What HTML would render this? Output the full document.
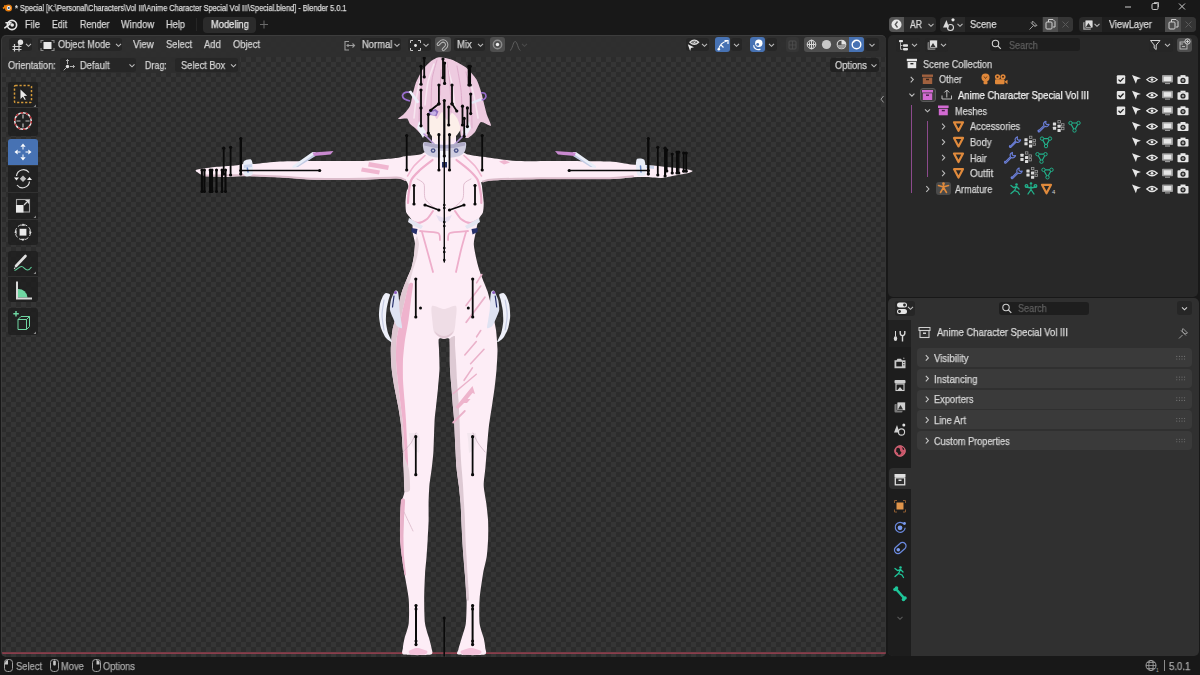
<!DOCTYPE html>
<html><head><meta charset="utf-8">
<style>
*{margin:0;padding:0;box-sizing:border-box}
html,body{width:1200px;height:675px;overflow:hidden;background:#181818;font-family:"Liberation Sans",sans-serif;color:#d6d6d6;position:relative}
.a{position:absolute}
.t{position:absolute;white-space:nowrap;line-height:12px;will-change:transform;-webkit-text-stroke:0.25px currentColor}
#vp{left:1px;top:35px;width:885px;box-shadow:inset 1px 0 0 #3a3a3a,inset -1px 0 0 #333;height:622px;border-radius:5px;overflow:hidden;background-color:#2c2c2c;
 background-image:linear-gradient(45deg,#353535 25%,transparent 25%,transparent 75%,#353535 75%),linear-gradient(45deg,#353535 25%,transparent 25%,transparent 75%,#353535 75%);
 background-size:10px 10px;background-position:0px 2px,5px 7px}
#outl{left:888px;top:35px;width:310px;height:262px;border-radius:5px;background:#282828}
#props{left:888px;top:298px;width:311px;height:358px;border-radius:5px;background:#303030}
svg{position:absolute;left:0;top:0}
</style></head><body>
<div class="a" style="left:196px;top:18px;width:1px;height:13px;background:#262626;border-radius:0px;"></div>
<div class="a" style="left:203px;top:17px;width:53px;height:16px;background:#2b2b2b;border-radius:4px;"></div>
<div id="vp" class="a"></div>
<svg width="1200" height="675" style="position:absolute;left:0;top:0"><defs><clipPath id="vpc"><rect x="2" y="35" width="884" height="622" rx="5"/></clipPath></defs><g clip-path="url(#vpc)"><rect x="2" y="652.3" width="884" height="1.6" fill="#94404f"/>
<path d="M196.0 170.0 C196.9 169.6 202.8 168.7 205.0 168.3 C207.2 168.0 211.5 167.3 215.0 167.0 C218.5 166.7 231.6 165.8 235.0 165.5 C238.4 165.2 241.7 164.2 244.0 164.0 C246.3 163.8 250.8 164.3 255.0 164.0 C259.2 163.7 273.0 161.9 280.0 161.6 C287.0 161.2 305.5 161.1 315.0 161.0 C324.5 160.9 352.2 161.3 361.7 161.0 C371.2 160.7 391.7 158.5 396.7 158.0 C401.7 157.5 402.2 156.7 404.9 156.3 C407.6 155.9 417.1 155.3 420.0 154.6 C422.9 153.9 425.6 150.5 430.0 150.0 C434.4 149.5 453.6 149.5 458.0 150.0 C462.4 150.5 464.6 153.7 468.0 154.6 C471.4 155.5 481.8 156.8 487.5 157.5 C493.2 158.2 507.9 160.6 516.7 161.0 C525.5 161.4 552.4 160.9 563.3 161.0 C574.2 161.1 602.1 161.2 610.0 161.6 C617.9 162.0 626.9 164.1 631.0 164.5 C635.1 164.9 641.4 164.8 645.0 165.0 C648.6 165.2 657.8 166.0 662.0 166.4 C666.2 166.8 677.5 167.8 681.0 168.3 C684.5 168.8 691.5 170.3 692.4 170.8 C693.3 171.3 690.5 172.5 688.5 173.0 C686.5 173.5 678.1 174.9 675.0 175.5 C671.9 176.1 665.5 177.7 662.0 177.9 C658.5 178.1 648.4 177.1 645.0 177.0 C641.6 176.9 637.1 177.0 633.0 177.2 C628.9 177.4 620.9 178.8 610.0 179.0 C599.1 179.2 553.6 178.8 540.0 179.0 C526.4 179.2 500.1 180.0 493.3 180.3 C486.5 180.7 483.0 181.3 481.7 182.0 C480.4 182.7 481.8 183.9 482.0 186.3 C482.2 188.7 483.6 199.6 483.7 202.6 C483.8 205.6 483.5 210.5 482.9 212.4 C482.3 214.3 479.7 216.6 478.8 219.0 C477.9 221.4 476.2 230.1 475.6 233.0 C475.0 235.9 473.8 241.1 473.8 243.7 C473.8 246.3 475.1 252.7 475.6 255.5 C476.1 258.3 477.7 264.6 478.5 267.4 C479.3 270.2 481.7 276.4 482.7 279.2 C483.7 282.0 486.6 288.7 487.4 291.1 C488.2 293.5 489.1 297.2 489.8 300.0 C490.5 302.8 492.3 311.5 493.0 315.0 C493.7 318.5 495.5 326.0 496.0 330.0 C496.5 334.0 497.4 344.8 497.5 349.3 C497.6 353.8 496.9 364.0 496.6 368.5 C496.3 373.0 495.2 383.3 494.6 387.8 C494.0 392.3 492.5 402.5 491.8 407.0 C491.1 411.5 489.5 421.5 488.9 426.3 C488.3 431.1 487.4 443.2 487.0 448.0 C486.6 452.8 485.8 463.4 485.4 467.8 C485.0 472.2 483.6 481.5 483.7 485.6 C483.8 489.7 485.8 499.2 486.3 503.3 C486.8 507.4 487.9 516.8 488.1 521.0 C488.3 525.2 488.3 534.8 488.1 538.9 C487.9 543.0 487.4 551.8 486.8 556.0 C486.2 560.2 483.7 569.5 482.9 574.5 C482.1 579.5 480.0 593.3 479.6 599.0 C479.2 604.7 479.1 618.9 479.6 623.4 C480.1 627.9 483.0 635.1 483.7 638.0 C484.4 640.9 485.2 646.0 485.3 647.9 C485.4 649.8 487.6 653.8 484.5 654.6 C481.4 655.4 461.4 655.2 458.4 654.6 C455.4 654.0 458.0 651.4 458.4 649.5 C458.8 647.6 460.8 641.0 461.7 638.0 C462.6 635.0 465.2 627.9 465.8 623.4 C466.4 618.9 466.7 604.7 466.6 599.0 C466.5 593.3 465.3 579.5 464.9 574.5 C464.5 569.5 463.7 560.2 463.4 556.0 C463.1 551.8 462.5 543.0 462.3 538.9 C462.1 534.8 461.6 525.2 461.4 521.0 C461.2 516.8 460.9 507.4 460.6 503.3 C460.3 499.2 459.3 489.7 458.8 485.6 C458.3 481.5 456.9 472.0 456.5 467.8 C456.1 463.6 455.8 455.6 455.5 450.0 C455.2 444.4 454.4 425.0 454.1 420.0 C453.8 415.0 453.3 410.7 453.0 407.0 C452.7 403.3 451.9 392.5 451.5 388.0 C451.1 383.5 450.2 373.0 450.0 368.5 C449.8 364.0 449.8 352.7 449.8 349.3 C449.8 345.9 450.3 340.3 449.6 339.0 C448.9 337.7 445.3 338.5 444.0 338.5 C442.7 338.5 439.4 337.7 438.8 339.0 C438.2 340.3 438.9 345.9 439.0 349.3 C439.1 352.7 439.6 364.0 439.5 368.5 C439.4 373.0 438.4 383.5 438.0 388.0 C437.6 392.5 436.4 403.3 436.0 407.0 C435.6 410.7 434.9 415.0 434.6 420.0 C434.3 425.0 433.8 444.4 433.5 450.0 C433.2 455.6 432.3 463.6 431.8 467.8 C431.3 472.0 429.8 481.5 429.4 485.6 C429.0 489.7 428.7 499.2 428.6 503.3 C428.5 507.4 428.7 516.8 428.6 521.0 C428.5 525.2 427.9 534.8 427.7 538.9 C427.5 543.0 426.9 551.8 426.6 556.0 C426.3 560.2 425.3 569.5 425.0 574.5 C424.7 579.5 424.2 593.3 424.2 599.0 C424.2 604.7 424.4 618.9 425.0 623.4 C425.6 627.9 428.2 635.1 429.0 638.0 C429.8 640.9 431.3 646.0 431.5 647.9 C431.7 649.8 433.9 653.8 430.7 654.6 C427.5 655.4 407.0 655.4 403.8 654.6 C400.6 653.8 402.8 649.8 402.9 647.9 C403.0 646.0 403.9 640.9 404.6 638.0 C405.3 635.1 408.2 627.9 408.7 623.4 C409.2 618.9 409.2 604.7 408.7 599.0 C408.2 593.3 405.4 579.4 404.6 574.5 C403.8 569.6 402.4 560.9 401.9 556.7 C401.4 552.5 400.3 543.1 400.1 538.9 C399.9 534.7 400.0 525.2 400.1 521.0 C400.2 516.8 400.5 506.8 401.0 503.3 C401.5 499.8 404.3 495.0 404.6 490.9 C404.9 486.8 403.9 472.6 403.7 467.8 C403.5 463.0 403.1 454.8 402.8 450.0 C402.5 445.2 401.7 431.3 401.2 426.3 C400.7 421.3 399.1 411.5 398.3 407.0 C397.5 402.5 395.3 392.3 394.5 387.8 C393.7 383.3 392.0 373.0 391.6 368.5 C391.2 364.0 390.7 353.8 390.8 349.3 C390.9 344.8 391.8 334.0 392.5 330.0 C393.2 326.0 395.7 318.5 396.5 315.0 C397.3 311.5 399.0 302.8 399.7 300.0 C400.4 297.2 401.3 293.5 402.1 291.1 C402.9 288.7 405.7 282.0 406.8 279.2 C407.9 276.4 410.8 270.2 411.6 267.4 C412.4 264.6 413.6 258.3 414.0 255.5 C414.4 252.7 415.1 246.3 415.0 243.7 C414.9 241.1 413.1 235.1 412.8 233.0 C412.5 230.9 412.7 227.0 412.5 225.4 C412.3 223.8 411.9 220.5 411.2 219.0 C410.5 217.5 407.0 214.3 406.3 212.4 C405.6 210.5 405.5 205.0 405.5 202.6 C405.5 200.2 406.2 193.9 406.5 192.0 C406.8 190.1 408.5 188.0 408.4 186.7 C408.3 185.4 407.4 181.8 406.0 180.8 C404.6 179.8 401.9 178.6 396.7 178.5 C391.5 178.4 371.2 179.6 361.7 179.7 C352.2 179.8 324.5 180.0 315.0 179.7 C305.5 179.4 288.3 177.7 280.0 177.3 C271.7 176.9 250.1 176.0 244.0 176.0 C237.9 176.0 232.6 177.0 228.0 177.0 C223.4 177.0 208.6 176.6 205.0 176.0 C201.4 175.4 198.1 172.7 197.0 172.0 C195.9 171.3 195.1 170.4 196.0 170.0Z" fill="#fdedf6"/>
<path d="M205.0 175.5 C210.2 175.5 234.0 175.2 244.0 175.3 C254.0 175.4 270.5 176.1 280.0 176.6 C289.5 177.1 304.1 178.5 315.0 178.8 C325.9 179.1 350.8 179.0 361.7 178.8 C372.6 178.6 390.9 177.3 396.7 177.5 C402.5 177.7 403.9 179.7 405.0 180.0" fill="none" stroke="#dcbccb" stroke-width="2" stroke-linecap="round" />
<path d="M633.0 176.3 C629.9 176.6 622.4 177.9 610.0 178.2 C597.6 178.5 555.6 178.0 540.0 178.2 C524.4 178.4 500.9 179.1 493.3 179.5 C485.7 179.9 484.4 181.2 483.0 181.5" fill="none" stroke="#dcbccb" stroke-width="2" stroke-linecap="round" />
<path d="M406.8 279.2 C406.1 279.9 402.8 289.0 402.1 291.1 C401.4 293.2 400.3 297.6 399.7 300.0 C399.1 302.4 397.2 312.0 396.5 315.0 C395.8 318.0 393.1 326.6 392.5 330.0 C391.9 333.4 390.9 345.4 390.8 349.3 C390.7 353.2 391.2 364.6 391.6 368.5 C392.0 372.4 393.8 383.9 394.5 387.8 C395.2 391.7 397.6 403.1 398.3 407.0 C399.0 410.9 400.8 422.0 401.2 426.3 C401.6 430.6 402.6 445.9 402.8 450.0 C403.1 454.1 403.5 463.7 403.7 467.8 C403.9 471.9 404.3 488.7 404.6 490.9 C404.9 493.1 406.4 491.1 406.5 490.0 C406.6 488.9 406.1 483.0 406.0 480.0 C405.9 477.0 405.2 464.0 405.0 460.0 C404.8 456.0 404.2 444.0 404.0 440.0 C403.8 436.0 402.9 424.0 402.5 420.0 C402.1 416.0 400.5 404.0 400.0 400.0 C399.5 396.0 398.1 384.0 397.7 380.0 C397.3 376.0 396.1 364.0 396.0 360.0 C395.9 356.0 396.1 344.0 396.5 340.0 C396.9 336.0 399.6 324.0 400.5 320.0 C401.4 316.0 404.1 303.6 405.0 300.0 C405.9 296.4 408.8 286.1 409.0 284.0 C409.2 281.9 407.5 278.5 406.8 279.2Z" fill="#dfc8d2" />
<path d="M409.0 284.0 C408.2 285.6 405.9 296.4 405.0 300.0 C404.1 303.6 401.4 316.0 400.5 320.0 C399.6 324.0 396.9 336.0 396.5 340.0 C396.1 344.0 395.9 356.0 396.0 360.0 C396.1 364.0 397.3 376.0 397.7 380.0 C398.1 384.0 399.5 396.0 400.0 400.0 C400.5 404.0 402.1 416.0 402.5 420.0 C402.9 424.0 403.8 436.0 404.0 440.0 C404.2 444.0 404.8 456.0 405.0 460.0 C405.2 464.0 405.9 477.0 406.0 480.0 C406.1 483.0 406.2 489.0 406.5 490.0 C406.8 491.0 408.3 491.0 408.5 490.0 C408.7 489.0 408.6 483.0 408.5 480.0 C408.4 477.0 408.1 464.0 408.0 460.0 C407.9 456.0 407.2 444.0 407.0 440.0 C406.8 436.0 406.2 424.0 406.0 420.0 C405.8 416.0 404.8 404.0 404.5 400.0 C404.2 396.0 403.1 384.0 403.0 380.0 C402.9 376.0 402.8 364.0 403.0 360.0 C403.2 356.0 404.4 344.0 405.0 340.0 C405.6 336.0 407.9 324.0 408.5 320.0 C409.1 316.0 410.6 303.6 411.0 300.0 C411.4 296.4 413.2 285.6 413.0 284.0 C412.8 282.4 409.8 282.4 409.0 284.0Z" fill="#efb3cd" />
<path d="M401.0 500.0 C400.5 502.1 400.2 517.1 400.1 521.0 C400.0 524.9 399.9 535.3 400.1 538.9 C400.3 542.5 401.4 553.1 401.9 556.7 C402.3 560.3 404.2 572.8 404.6 574.5 C405.0 576.2 406.1 575.9 406.0 574.0 C405.9 572.1 404.2 559.6 404.0 556.0 C403.8 552.4 403.5 541.6 403.5 538.0 C403.5 534.4 403.9 523.8 404.0 520.0 C404.1 516.2 405.3 502.0 405.0 500.0 C404.7 498.0 401.5 497.9 401.0 500.0Z" fill="#e9b2ca" />
<path d="M403.5 455.0 C404.0 455.2 408.4 466.5 409.0 470.0 C409.6 473.5 410.4 487.9 410.0 490.0 C409.6 492.1 405.2 493.1 404.6 490.9 C404.0 488.7 403.8 471.4 403.7 467.8 C403.6 464.2 403.0 454.8 403.5 455.0Z" fill="#e4d2da" />
<path d="M404.0 512.0 C405.2 514.5 411.8 528.5 413.0 531.0" fill="none" stroke="#d9b8c8" stroke-width="0.8" stroke-linecap="round" />
<path d="M449.6 339.0 C449.1 340.3 449.8 346.4 449.8 349.3 C449.8 352.2 449.8 364.6 450.0 368.5 C450.2 372.4 451.2 384.1 451.5 388.0 C451.8 391.9 452.7 403.8 453.0 407.0 C453.3 410.2 453.9 415.7 454.1 420.0 C454.4 424.3 455.3 445.2 455.5 450.0 C455.7 454.8 456.2 464.2 456.5 467.8 C456.8 471.4 458.4 482.1 458.8 485.6 C459.2 489.2 460.3 499.8 460.6 503.3 C460.9 506.8 461.2 517.4 461.4 521.0 C461.6 524.6 462.1 535.4 462.3 538.9 C462.5 542.4 463.1 552.4 463.4 556.0 C463.7 559.6 464.6 570.2 464.9 574.5 C465.2 578.8 466.2 596.5 466.6 599.0 C467.0 601.5 468.9 601.5 469.0 599.0 C469.1 596.5 467.8 578.3 467.5 574.0 C467.2 569.7 466.7 559.6 466.5 556.0 C466.3 552.4 465.6 541.5 465.5 538.0 C465.4 534.5 465.1 524.5 465.0 521.0 C464.9 517.5 464.2 506.6 464.0 503.0 C463.8 499.4 463.2 488.6 463.0 485.0 C462.8 481.4 461.8 470.5 461.5 467.0 C461.2 463.5 460.7 454.7 460.5 450.0 C460.3 445.3 459.7 425.0 459.5 420.0 C459.3 415.0 458.8 404.0 458.5 400.0 C458.2 396.0 457.2 384.0 457.0 380.0 C456.8 376.0 456.2 363.5 456.0 360.0 C455.8 356.5 455.1 347.4 455.0 345.0 C454.9 342.6 455.3 336.6 454.8 336.0 C454.3 335.4 450.1 337.7 449.6 339.0Z" fill="#ddc9d3" />
<path d="M432.0 306.0 C433.5 304.3 440.8 309.0 444.0 309.0 C447.2 309.0 454.5 304.3 456.0 306.0 C457.5 307.7 455.8 318.4 455.5 322.0 C455.2 325.6 454.8 330.8 453.5 333.0 C452.2 335.2 447.5 337.8 446.0 338.5 C444.5 339.2 443.5 339.2 442.0 338.5 C440.5 337.8 435.8 335.2 434.5 333.0 C433.2 330.8 432.8 325.6 432.5 322.0 C432.2 318.4 430.5 307.7 432.0 306.0Z" fill="#efdde6" />
<path d="M434.5 331q9.5 10 19 0q-2 6-9.5 7.5q-7.5-1.5-9.5-7.5z" fill="#e2c9d5" />
<path d="M481.8 274.5 C481.1 275.6 477.3 281.7 476.6 282.8" fill="none" stroke="#eab2ca" stroke-width="1.6" stroke-linecap="round" />
<path d="M480.7 286.0 C478.7 288.6 468.0 303.0 466.0 305.6" fill="none" stroke="#eab2ca" stroke-width="1.6" stroke-linecap="round" />
<path d="M484.9 297.3 C482.4 300.6 468.7 318.9 466.2 322.2" fill="none" stroke="#eab2ca" stroke-width="1.8" stroke-linecap="round" />
<path d="M480.7 330.5 C480.2 331.3 477.1 336.0 476.6 336.8" fill="none" stroke="#eab2ca" stroke-width="1.6" stroke-linecap="round" />
<path d="M476.3 341.6 C474.8 343.4 466.3 353.2 464.8 355.0" fill="none" stroke="#eab2ca" stroke-width="1.6" stroke-linecap="round" />
<path d="M484.0 349.3 C482.2 351.2 472.4 361.8 470.6 363.7" fill="none" stroke="#eab2ca" stroke-width="1.6" stroke-linecap="round" />
<path d="M472.4 367.9 C471.3 369.6 465.2 378.6 464.1 380.3" fill="none" stroke="#eab2ca" stroke-width="1.6" stroke-linecap="round" />
<path d="M476.3 374.3 C473.2 376.9 456.3 391.0 453.2 393.6" fill="none" stroke="#eab2ca" stroke-width="1.4" stroke-linecap="round" />
<path d="M464.8 411.0 C463.3 412.5 454.7 421.0 453.2 422.5" fill="none" stroke="#eab2ca" stroke-width="1.8" stroke-linecap="round" />
<path d="M472.5 386l-17 21 2.5 2 6-6 3 0 3.5-4-3 0 5-6 2.5 1z" fill="#eeb4cc" />
<path d="M415.0 243.7 C414.7 245.6 414.3 253.1 414.0 255.5 C413.7 257.9 412.3 265.0 411.6 267.4 C410.9 269.8 407.1 277.5 406.8 279.2 C406.5 280.9 408.4 284.9 409.0 284.0 C409.6 283.1 412.2 272.7 413.0 270.0 C413.8 267.3 416.4 259.6 417.0 257.0 C417.6 254.4 419.0 246.1 419.0 244.0 C419.0 241.9 417.4 236.0 417.0 236.0 C416.6 236.0 415.3 241.8 415.0 243.7Z" fill="#e8d6de" />
<path d="M432.5 160.0 C430.8 161.3 422.8 167.3 420.0 170.0 C417.2 172.7 412.8 176.7 411.3 180.0 C409.8 183.3 408.9 191.9 408.5 195.0 C408.1 198.1 408.1 201.9 408.0 203.0" fill="none" stroke="#eeaecb" stroke-width="2.2" stroke-linecap="round" />
<path d="M456.5 160.0 C458.2 161.3 466.2 167.3 469.0 170.0 C471.8 172.7 476.1 176.7 477.7 180.0 C479.3 183.3 480.5 191.9 481.0 195.0 C481.5 198.1 481.3 201.9 481.3 203.0" fill="none" stroke="#eeaecb" stroke-width="2.2" stroke-linecap="round" />
<path d="M425.0 155.5 C423.5 156.9 416.3 163.3 414.0 166.0 C411.7 168.7 408.4 174.7 407.5 176.0" fill="none" stroke="#f0b6d0" stroke-width="1.6" stroke-linecap="round" />
<path d="M464.0 155.5 C465.5 156.9 472.7 163.3 475.0 166.0 C477.3 168.7 480.6 174.7 481.5 176.0" fill="none" stroke="#f0b6d0" stroke-width="1.6" stroke-linecap="round" />
<path d="M433.0 211.0 C432.2 212.1 429.0 217.4 427.0 219.0 C425.0 220.6 420.3 222.9 418.0 223.0 C415.7 223.1 411.1 220.4 410.0 220.0" fill="none" stroke="#eeaecb" stroke-width="2" stroke-linecap="round" />
<path d="M455.0 211.0 C455.8 212.1 459.0 217.4 461.0 219.0 C463.0 220.6 467.7 222.9 470.0 223.0 C472.3 223.1 476.9 220.4 478.0 220.0" fill="none" stroke="#eeaecb" stroke-width="2" stroke-linecap="round" />
<path d="M420.0 231.0 C422.4 231.3 435.3 231.8 438.0 233.0 C440.7 234.2 439.7 239.1 440.0 240.0" fill="none" stroke="#eeaecb" stroke-width="1.8" stroke-linecap="round" />
<path d="M468.0 231.0 C465.6 231.3 452.7 231.8 450.0 233.0 C447.3 234.2 448.3 239.1 448.0 240.0" fill="none" stroke="#eeaecb" stroke-width="1.8" stroke-linecap="round" />
<path d="M422.0 232.0 C422.7 234.4 425.5 244.7 427.0 250.0 C428.5 255.3 432.2 269.1 433.0 272.0" fill="none" stroke="#eeaecb" stroke-width="1.8" stroke-linecap="round" />
<path d="M466.0 232.0 C465.3 234.4 462.3 244.7 461.0 250.0 C459.7 255.3 456.7 269.1 456.0 272.0" fill="none" stroke="#eeaecb" stroke-width="1.8" stroke-linecap="round" />
<path d="M417.0 179.0 C417.9 179.7 422.9 181.3 424.0 184.0 C425.1 186.7 423.6 195.5 425.3 199.0 C427.0 202.5 435.4 208.5 437.0 210.0" fill="none" stroke="#d9b3c6" stroke-width="0.8" stroke-linecap="round" />
<path d="M471.0 179.0 C470.1 179.7 465.1 181.3 464.0 184.0 C462.9 186.7 464.4 195.5 462.7 199.0 C461.0 202.5 452.6 208.5 451.0 210.0" fill="none" stroke="#d9b3c6" stroke-width="0.8" stroke-linecap="round" />
<g fill="#f0b6d0"><path d="M362 167.5l18 3-1 4-18-3z"/><path d="M369 162l20 3.5-1 4.5-20-3.5z"/><path d="M499 161.5l6-1.5 5 2.5-6 2z"/></g>
<path d="M409 218q7 4 14 8l-2 3q-8-3-13-7z" fill="#e4e6f2" />
<path d="M411.5 228l6 1-1 5.5-5-2.5z" fill="#27306a" />
<path d="M479 218q-7 4-14 8l2 3q8-3 13-7z" fill="#e4e6f2" />
<path d="M477.5 228l-6 1 1 5.5 5-2.5z" fill="#27306a" />
<path d="M436 215l8 3 8-3-3 6-5 2-5-2z" fill="#e8def0" />
<path d="M292.5 168l4.5 -0.5 19.5-13 -1-2.5-3 0-20 14z" fill="#e9eef8" />
<path d="M296 167l18-12.5 1.5 1.5-17.5 11z" fill="#c3cbe4" />
<path d="M312.5 152.5l21-1.5-3 3.5-16.5 1.5z" fill="#c98ad0" />
<path d="M596 168l-4.5 -0.5-19.5-13 1-2.5 3 0 20 14z" fill="#e9eef8" />
<path d="M592.5 167l-18-12.5-1.5 1.5 17.5 11z" fill="#c3cbe4" />
<path d="M576 152.5l-21-1.5 3 3.5 16.5 1.5z" fill="#c98ad0" />
<path d="M244.0 161.0 C245.1 159.9 249.8 158.7 251.0 159.5 C252.2 160.3 252.9 164.9 253.0 167.0 C253.1 169.1 253.1 173.8 252.0 175.0 C250.9 176.2 246.2 176.9 245.0 176.0 C243.8 175.1 243.1 170.0 243.0 168.0 C242.9 166.0 242.9 162.1 244.0 161.0Z" fill="#e8ecf6" />
<path d="M247.0 166.0 C247.1 166.8 247.9 171.2 248.0 172.0" fill="none" stroke="#6a88c8" stroke-width="1.5" stroke-linecap="round" />
<path d="M637.0 159.0 C638.1 158.0 642.9 158.4 644.0 159.5 C645.1 160.6 645.4 164.9 645.5 167.0 C645.6 169.1 646.0 173.9 645.0 175.0 C644.0 176.1 639.2 176.6 638.0 175.5 C636.8 174.4 636.1 169.2 636.0 167.0 C635.9 164.8 635.9 160.0 637.0 159.0Z" fill="#e8ecf6" />
<path d="M640.5 166.0 C640.6 166.8 640.9 171.2 641.0 172.0" fill="none" stroke="#6a88c8" stroke-width="1.5" stroke-linecap="round" />
<path d="M252 164l-8 1 0 3 8-1z" fill="#c9d3ea" />
<path d="M646 165l8 1 0 3-8-1z" fill="#c9d3ea" />
<path d="M386.0 293.0 C386.8 292.8 389.7 293.7 390.0 294.5 C390.3 295.3 388.9 298.2 388.5 300.0 C388.1 301.8 386.8 307.4 386.5 310.0 C386.2 312.6 385.8 319.3 386.0 322.0 C386.2 324.7 387.3 330.7 388.0 333.0 C388.7 335.3 392.2 341.4 392.0 342.0 C391.8 342.6 387.3 339.6 386.0 338.0 C384.7 336.4 381.8 330.6 381.0 328.0 C380.2 325.4 379.1 318.8 379.0 316.0 C378.9 313.2 379.5 306.3 380.0 304.0 C380.5 301.7 382.3 297.3 383.0 296.0 C383.7 294.7 385.2 293.2 386.0 293.0Z" fill="#eef0f9" />
<path d="M503.2 293.0 C502.4 292.8 499.5 293.7 499.2 294.5 C498.9 295.3 500.3 298.2 500.7 300.0 C501.1 301.8 502.4 307.4 502.7 310.0 C503.0 312.6 503.4 319.3 503.2 322.0 C503.0 324.7 501.9 330.7 501.2 333.0 C500.5 335.3 497.0 341.4 497.2 342.0 C497.4 342.6 501.9 339.6 503.2 338.0 C504.5 336.4 507.4 330.6 508.2 328.0 C509.0 325.4 510.1 318.8 510.2 316.0 C510.3 313.2 509.7 306.3 509.2 304.0 C508.7 301.7 506.9 297.3 506.2 296.0 C505.5 294.7 504.0 293.2 503.2 293.0Z" fill="#eef0f9" />
<path d="M395.0 291.0 C395.8 290.1 397.5 290.9 398.0 292.0 C398.5 293.1 398.8 297.9 399.0 300.0 C399.2 302.1 399.3 307.7 399.5 310.0 C399.7 312.3 400.7 317.9 401.0 320.0 C401.3 322.1 402.5 327.3 402.0 328.0 C401.5 328.7 398.1 327.2 397.0 326.0 C395.9 324.8 393.8 319.9 393.0 318.0 C392.2 316.1 390.2 312.1 390.0 310.0 C389.8 307.9 390.4 302.2 391.0 300.0 C391.6 297.8 394.2 291.9 395.0 291.0Z" fill="#dfe3f2" />
<path d="M494.2 291.0 C493.4 290.1 491.7 290.9 491.2 292.0 C490.7 293.1 490.4 297.9 490.2 300.0 C490.0 302.1 489.9 307.7 489.7 310.0 C489.5 312.3 488.5 317.9 488.2 320.0 C487.9 322.1 486.7 327.3 487.2 328.0 C487.7 328.7 491.2 327.2 492.2 326.0 C493.3 324.8 495.4 319.9 496.2 318.0 C497.0 316.1 499.0 312.1 499.2 310.0 C499.4 307.9 498.8 302.2 498.2 300.0 C497.6 297.8 495.0 291.9 494.2 291.0Z" fill="#dfe3f2" />
<path d="M384.0 300.0 C383.7 302.0 382.0 311.0 382.0 315.0 C382.0 319.0 383.7 328.0 384.0 330.0" fill="none" stroke="#c5cbe3" stroke-width="1.2" stroke-linecap="round" />
<path d="M505.2 300.0 C505.5 302.0 507.2 311.0 507.2 315.0 C507.2 319.0 505.5 328.0 505.2 330.0" fill="none" stroke="#c5cbe3" stroke-width="1.2" stroke-linecap="round" />
<path d="M394.0 296.0 C393.8 297.5 392.7 305.5 392.5 307.0" fill="none" stroke="#27306a" stroke-width="1.2" stroke-linecap="round" />
<path d="M495.2 296.0 C495.4 297.5 496.5 305.5 496.7 307.0" fill="none" stroke="#27306a" stroke-width="1.2" stroke-linecap="round" />
<circle cx="395.5" cy="292.5" r="1.5" fill="#8c5cc0"/><circle cx="493.7" cy="292.5" r="1.5" fill="#8c5cc0"/>
<path d="M409 433h9l2 6-1 14-5-3-4-10z" fill="#f3e6ee" />
<path d="M467 433h9l1 7-3 10-5 3-1-14z" fill="#f3e6ee" />
<path d="M403.0 452.0 C404.1 450.8 409.3 445.5 411.0 443.0 C412.7 440.5 415.3 434.3 416.0 433.0" fill="none" stroke="#c9aebd" stroke-width="0.7" stroke-linecap="round" />
<path d="M473.0 433.0 C473.7 434.3 476.4 440.5 478.0 443.0 C479.6 445.5 484.1 450.8 485.0 452.0" fill="none" stroke="#c9aebd" stroke-width="0.7" stroke-linecap="round" />
<path d="M409.0 651.0 C409.8 650.1 414.6 648.0 417.0 648.0 C419.4 648.0 425.9 650.1 427.0 651.0 C428.1 651.9 427.1 654.0 425.0 654.5 C422.9 655.0 413.1 655.0 411.0 654.5 C408.9 654.0 408.2 651.9 409.0 651.0Z" fill="#f4c2da" />
<path d="M461.0 651.0 C462.1 650.1 468.3 648.0 471.0 648.0 C473.7 648.0 479.9 650.1 481.0 651.0 C482.1 651.9 481.4 654.0 479.0 654.5 C476.6 655.0 465.4 655.0 463.0 654.5 C460.6 654.0 459.9 651.9 461.0 651.0Z" fill="#f4c2da" />
<path d="M432 126h24v20h-24z" fill="#fdedf6" />
<path d="M428.0 110.0 C430.4 107.3 439.7 106.0 444.0 106.0 C448.3 106.0 457.6 107.3 460.0 110.0 C462.4 112.7 462.7 122.4 462.0 126.0 C461.3 129.6 457.4 135.0 455.0 137.0 C452.6 139.0 446.9 141.0 444.0 141.0 C441.1 141.0 435.4 139.0 433.0 137.0 C430.6 135.0 426.7 129.6 426.0 126.0 C425.3 122.4 425.6 112.7 428.0 110.0Z" fill="#fcefe9" />
<path d="M438.9 57.3 C436.8 57.5 432.3 60.2 430.7 61.4 C429.1 62.6 424.1 67.5 422.6 69.6 C421.1 71.7 417.0 80.2 416.0 82.6 C415.0 85.0 413.4 91.7 412.8 94.0 C412.2 96.3 410.9 104.0 410.0 106.0 C409.1 108.0 405.2 112.7 404.0 114.0 C402.8 115.3 397.8 118.3 398.1 118.8 C398.4 119.3 405.8 118.1 407.0 118.6 C408.2 119.1 409.2 123.1 410.0 124.0 C410.8 124.9 413.9 127.0 415.0 128.0 C416.1 129.0 419.8 133.1 421.0 134.0 C422.2 134.9 426.2 137.6 427.0 137.0 C427.8 136.4 428.9 129.9 429.0 128.0 C429.1 126.1 427.6 119.4 428.0 118.0 C428.4 116.6 432.1 113.9 433.0 114.0 C433.9 114.1 436.1 119.2 437.0 119.0 C437.9 118.8 441.0 111.9 442.0 112.0 C443.0 112.1 446.0 119.9 447.0 120.0 C448.0 120.1 451.0 113.2 452.0 113.0 C453.0 112.8 456.2 116.7 457.0 118.0 C457.8 119.3 459.6 124.2 460.0 126.0 C460.4 127.8 460.2 134.8 461.0 136.0 C461.8 137.2 466.6 138.4 468.0 138.0 C469.4 137.6 473.7 133.6 475.0 132.0 C476.3 130.4 479.4 122.6 481.0 122.0 C482.6 121.4 490.4 126.5 491.0 125.8 C491.6 125.1 487.6 117.0 487.0 115.0 C486.4 113.0 485.1 107.7 484.5 105.4 C483.9 103.1 482.1 95.0 481.3 92.4 C480.5 89.8 477.9 81.7 476.4 79.3 C474.9 76.9 469.0 70.0 466.6 68.0 C464.2 66.0 454.8 60.9 452.0 59.8 C449.2 58.7 441.0 57.1 438.9 57.3Z" fill="#eecbe0" />
<path d="M434.0 64.0 C433.2 66.4 429.2 76.5 428.0 82.0 C426.8 87.5 425.4 101.9 425.0 105.0" fill="none" stroke="#f7e6f0" stroke-width="1.6" stroke-linecap="round" />
<path d="M446.0 62.0 C446.8 64.9 450.8 77.9 452.0 84.0 C453.2 90.1 454.6 104.8 455.0 108.0" fill="none" stroke="#f7e6f0" stroke-width="1.6" stroke-linecap="round" />
<path d="M420.0 80.0 C419.5 82.7 416.8 94.9 416.0 100.0 C415.2 105.1 414.3 115.6 414.0 118.0" fill="none" stroke="#f7e6f0" stroke-width="1.6" stroke-linecap="round" />
<path d="M468.0 74.0 C468.8 76.9 472.7 90.1 474.0 96.0 C475.3 101.9 477.5 115.1 478.0 118.0" fill="none" stroke="#f7e6f0" stroke-width="1.6" stroke-linecap="round" />
<path d="M437.0 60.0 C436.3 62.7 432.8 73.1 432.0 80.0 C431.2 86.9 431.1 107.7 431.0 112.0" fill="none" stroke="#deaccb" stroke-width="1.0" stroke-linecap="round" />
<path d="M447.0 62.0 C447.4 65.1 449.5 78.3 450.0 85.0 C450.5 91.7 450.9 108.4 451.0 112.0" fill="none" stroke="#deaccb" stroke-width="1.0" stroke-linecap="round" />
<path d="M425.0 75.0 C424.3 77.7 420.8 87.9 420.0 95.0 C419.2 102.1 419.1 123.6 419.0 128.0" fill="none" stroke="#deaccb" stroke-width="1.0" stroke-linecap="round" />
<path d="M466.0 72.0 C466.7 75.1 470.2 87.5 471.0 95.0 C471.8 102.5 471.9 123.6 472.0 128.0" fill="none" stroke="#deaccb" stroke-width="1.0" stroke-linecap="round" />
<path d="M441.0 70.0 C440.9 73.3 440.1 91.7 440.0 95.0" fill="none" stroke="#deaccb" stroke-width="1.0" stroke-linecap="round" />
<path d="M457.0 66.0 C457.5 69.2 460.3 83.9 461.0 90.0 C461.7 96.1 461.9 109.1 462.0 112.0" fill="none" stroke="#deaccb" stroke-width="1.0" stroke-linecap="round" />
<path d="M428.5 111.5l7-2.5 3 2.5-2 4.5-6.5-1z" fill="#8f70bf" />
<path d="M430 112.5l5-1.5 1.5 2-1.5 2.5-4-1z" fill="#c6b0e6" />
<path d="M410 92.5q-6 -1.5-7.5 3q0 4 7.5 5.5" fill="none" stroke="#9a6fd0" stroke-width="1.7"/>
<path d="M408.5 91.5l2.5-1 8.5 11.5-2.5 1.5z" fill="#eef0fa" />
<path d="M481 93q5 -1 5 3.5q-1 3.5-5 3.5" fill="none" stroke="#9a6fd0" stroke-width="1.6"/>
<path d="M471 102l10-4 1 2.5-10 3.5z" fill="#e6eaf8" />
<path d="M419 121l7 11-3 6-6-10z" fill="#eef0f8" />
<path d="M469 121l-7 11 3 6 6-10z" fill="#eef0f8" />
<path d="M424.0 134.0 C424.9 134.9 429.4 139.4 431.0 141.0 C432.6 142.6 435.3 145.3 436.0 146.0" fill="none" stroke="#b596d6" stroke-width="1.6" stroke-linecap="round" />
<path d="M465.0 134.0 C464.1 134.9 459.6 139.4 458.0 141.0 C456.4 142.6 453.7 145.3 453.0 146.0" fill="none" stroke="#b596d6" stroke-width="1.6" stroke-linecap="round" />
<path d="M424.2 142.0 C426.6 141.4 439.7 145.5 444.5 145.5 C449.3 145.5 462.6 141.4 465.0 142.0 C467.4 142.6 465.7 149.3 465.0 151.0 C464.3 152.7 461.4 155.5 459.0 156.3 C456.6 157.1 447.9 158.0 444.5 158.0 C441.1 158.0 432.4 157.1 430.0 156.3 C427.6 155.5 424.7 152.7 424.0 151.0 C423.3 149.3 421.8 142.6 424.2 142.0Z" fill="#cfcde0" />
<path d="M424.2 142q20.3 6 40.8 0v3.5q-20.3 6-40.8 0z" fill="#aeaac6" />
<circle cx="433.1" cy="150.6" r="2.4" fill="#4a5288"/><circle cx="433.1" cy="150.6" r="1" fill="#cfcde0"/><circle cx="456.2" cy="150.6" r="2.4" fill="#4a5288"/><circle cx="456.2" cy="150.6" r="1" fill="#cfcde0"/>
<path d="M440 151h8.8l-0.8 14.5-3.6 2.5-3.6-2.5z" fill="#f6f6fc" />
<path d="M442 162h5v5.5h-5z" fill="#2a3566" />
<path d="M424.2 58.1L424.2 76.9" stroke="#0a0a0a" stroke-width="1.8" stroke-linecap="round"/>
<circle cx="424.2" cy="58.1" r="1.6" fill="#0a0a0a"/><circle cx="424.2" cy="76.9" r="1.6" fill="#0a0a0a"/>
<path d="M421 66.3L421 84.2" stroke="#0a0a0a" stroke-width="1.8" stroke-linecap="round"/>
<circle cx="421" cy="66.3" r="1.6" fill="#0a0a0a"/><circle cx="421" cy="84.2" r="1.6" fill="#0a0a0a"/>
<path d="M443 59L443 77.7" stroke="#0a0a0a" stroke-width="1.8" stroke-linecap="round"/>
<circle cx="443" cy="59" r="1.6" fill="#0a0a0a"/><circle cx="443" cy="77.7" r="1.6" fill="#0a0a0a"/>
<path d="M444.6 63L444.6 83.4" stroke="#0a0a0a" stroke-width="1.8" stroke-linecap="round"/>
<circle cx="444.6" cy="63" r="1.6" fill="#0a0a0a"/><circle cx="444.6" cy="83.4" r="1.6" fill="#0a0a0a"/>
<path d="M469 66.3L469 85" stroke="#0a0a0a" stroke-width="2.6" stroke-linecap="round"/>
<circle cx="469" cy="66.3" r="1.6" fill="#0a0a0a"/><circle cx="469" cy="85" r="1.6" fill="#0a0a0a"/>
<path d="M470.3 66.3L470.3 85" stroke="#0a0a0a" stroke-width="1.5" stroke-linecap="round"/>
<circle cx="470.3" cy="66.3" r="1.6" fill="#0a0a0a"/><circle cx="470.3" cy="85" r="1.6" fill="#0a0a0a"/>
<path d="M421 90L421 125.8" stroke="#0a0a0a" stroke-width="1.8" stroke-linecap="round"/>
<circle cx="421" cy="90" r="1.6" fill="#0a0a0a"/><circle cx="421" cy="125.8" r="1.6" fill="#0a0a0a"/>
<circle cx="421" cy="107.9" r="1.7" fill="#0a0a0a"/>
<path d="M438.9 85L438.9 103.8" stroke="#0a0a0a" stroke-width="1.8" stroke-linecap="round"/>
<circle cx="438.9" cy="85" r="1.6" fill="#0a0a0a"/><circle cx="438.9" cy="103.8" r="1.6" fill="#0a0a0a"/>
<path d="M438.9 103.8L430.7 110.3" stroke="#0a0a0a" stroke-width="1.8" stroke-linecap="round"/>
<circle cx="438.9" cy="103.8" r="1.6" fill="#0a0a0a"/><circle cx="430.7" cy="110.3" r="1.6" fill="#0a0a0a"/>
<path d="M452 85L452 103.8" stroke="#0a0a0a" stroke-width="1.8" stroke-linecap="round"/>
<circle cx="452" cy="85" r="1.6" fill="#0a0a0a"/><circle cx="452" cy="103.8" r="1.6" fill="#0a0a0a"/>
<path d="M452 103.8L456.8 111" stroke="#0a0a0a" stroke-width="1.8" stroke-linecap="round"/>
<circle cx="452" cy="103.8" r="1.6" fill="#0a0a0a"/><circle cx="456.8" cy="111" r="1.6" fill="#0a0a0a"/>
<path d="M470.7 94L470.7 113.6" stroke="#0a0a0a" stroke-width="1.8" stroke-linecap="round"/>
<circle cx="470.7" cy="94" r="1.6" fill="#0a0a0a"/><circle cx="470.7" cy="113.6" r="1.6" fill="#0a0a0a"/>
<path d="M444.3 100.5L444.3 156" stroke="#0a0a0a" stroke-width="2.2" stroke-linecap="round"/>
<circle cx="444.3" cy="100.5" r="1.6" fill="#0a0a0a"/><circle cx="444.3" cy="156" r="1.6" fill="#0a0a0a"/>
<path d="M448.7 107L448.7 125" stroke="#0a0a0a" stroke-width="1.8" stroke-linecap="round"/>
<circle cx="448.7" cy="107" r="1.6" fill="#0a0a0a"/><circle cx="448.7" cy="125" r="1.6" fill="#0a0a0a"/>
<path d="M428.3 114.4L428.3 133.1" stroke="#0a0a0a" stroke-width="1.8" stroke-linecap="round"/>
<circle cx="428.3" cy="114.4" r="1.6" fill="#0a0a0a"/><circle cx="428.3" cy="133.1" r="1.6" fill="#0a0a0a"/>
<path d="M462.5 106.2L462.5 125" stroke="#0a0a0a" stroke-width="1.8" stroke-linecap="round"/>
<circle cx="462.5" cy="106.2" r="1.6" fill="#0a0a0a"/><circle cx="462.5" cy="125" r="1.6" fill="#0a0a0a"/>
<path d="M467.4 107.9L467.4 126.6" stroke="#0a0a0a" stroke-width="1.8" stroke-linecap="round"/>
<circle cx="467.4" cy="107.9" r="1.6" fill="#0a0a0a"/><circle cx="467.4" cy="126.6" r="1.6" fill="#0a0a0a"/>
<path d="M464.2 118.4L464.2 136.4" stroke="#0a0a0a" stroke-width="1.8" stroke-linecap="round"/>
<circle cx="464.2" cy="118.4" r="1.6" fill="#0a0a0a"/><circle cx="464.2" cy="136.4" r="1.6" fill="#0a0a0a"/>
<path d="M438.9 134.7L438.9 170" stroke="#0a0a0a" stroke-width="1.8" stroke-linecap="round"/>
<circle cx="438.9" cy="134.7" r="1.6" fill="#0a0a0a"/><circle cx="438.9" cy="170" r="1.6" fill="#0a0a0a"/>
<path d="M449.5 134.7L449.5 170" stroke="#0a0a0a" stroke-width="1.8" stroke-linecap="round"/>
<circle cx="449.5" cy="134.7" r="1.6" fill="#0a0a0a"/><circle cx="449.5" cy="170" r="1.6" fill="#0a0a0a"/>
<path d="M406.7 135.6L406.7 170" stroke="#0a0a0a" stroke-width="1.8" stroke-linecap="round"/>
<circle cx="406.7" cy="135.6" r="1.6" fill="#0a0a0a"/><circle cx="406.7" cy="170" r="1.6" fill="#0a0a0a"/>
<path d="M482.2 135.6L482.2 170" stroke="#0a0a0a" stroke-width="1.8" stroke-linecap="round"/>
<circle cx="482.2" cy="135.6" r="1.6" fill="#0a0a0a"/><circle cx="482.2" cy="170" r="1.6" fill="#0a0a0a"/>
<path d="M444.3 135L444.3 262" stroke="#0a0a0a" stroke-width="1.4" stroke-linecap="round"/>
<circle cx="444.3" cy="205" r="1.3" fill="#0a0a0a"/>
<circle cx="444.3" cy="208" r="1.3" fill="#0a0a0a"/>
<circle cx="444.3" cy="222" r="1.3" fill="#0a0a0a"/>
<circle cx="444.3" cy="226" r="1.3" fill="#0a0a0a"/>
<circle cx="444.3" cy="248" r="1.3" fill="#0a0a0a"/>
<circle cx="444.3" cy="252" r="1.3" fill="#0a0a0a"/>
<circle cx="444.3" cy="260" r="1.3" fill="#0a0a0a"/>
<path d="M240.8 170.5L319.7 170.5" stroke="#0a0a0a" stroke-width="1.4" stroke-linecap="round"/>
<circle cx="240.8" cy="170.5" r="1.6" fill="#0a0a0a"/><circle cx="319.7" cy="170.5" r="1.6" fill="#0a0a0a"/>
<path d="M569.2 170.5L648.3 170.5" stroke="#0a0a0a" stroke-width="1.4" stroke-linecap="round"/>
<circle cx="569.2" cy="170.5" r="1.6" fill="#0a0a0a"/><circle cx="648.3" cy="170.5" r="1.6" fill="#0a0a0a"/>
<path d="M240.8 138.6L240.8 174" stroke="#0a0a0a" stroke-width="2.4" stroke-linecap="round"/>
<circle cx="240.8" cy="138.6" r="1.6" fill="#0a0a0a"/><circle cx="240.8" cy="174" r="1.6" fill="#0a0a0a"/>
<path d="M230.6 147.3L230.6 175" stroke="#0a0a0a" stroke-width="1.8" stroke-linecap="round"/>
<circle cx="230.6" cy="147.3" r="1.6" fill="#0a0a0a"/><circle cx="230.6" cy="175" r="1.6" fill="#0a0a0a"/>
<path d="M223.7 148.2L223.7 174" stroke="#0a0a0a" stroke-width="1.8" stroke-linecap="round"/>
<circle cx="223.7" cy="148.2" r="1.6" fill="#0a0a0a"/><circle cx="223.7" cy="174" r="1.6" fill="#0a0a0a"/>
<path d="M201.9 170L201.9 191.5" stroke="#0a0a0a" stroke-width="2.1" stroke-linecap="round"/>
<circle cx="201.9" cy="170" r="1.5" fill="#0a0a0a"/><circle cx="201.9" cy="191.5" r="1.5" fill="#0a0a0a"/>
<path d="M204.4 170L204.4 191.5" stroke="#0a0a0a" stroke-width="2.1" stroke-linecap="round"/>
<circle cx="204.4" cy="170" r="1.5" fill="#0a0a0a"/><circle cx="204.4" cy="191.5" r="1.5" fill="#0a0a0a"/>
<path d="M210.1 170L210.1 191.5" stroke="#0a0a0a" stroke-width="2.1" stroke-linecap="round"/>
<circle cx="210.1" cy="170" r="1.5" fill="#0a0a0a"/><circle cx="210.1" cy="191.5" r="1.5" fill="#0a0a0a"/>
<path d="M212 170L212 191.5" stroke="#0a0a0a" stroke-width="2.1" stroke-linecap="round"/>
<circle cx="212" cy="170" r="1.5" fill="#0a0a0a"/><circle cx="212" cy="191.5" r="1.5" fill="#0a0a0a"/>
<path d="M216.5 170L216.5 191.5" stroke="#0a0a0a" stroke-width="2.1" stroke-linecap="round"/>
<circle cx="216.5" cy="170" r="1.5" fill="#0a0a0a"/><circle cx="216.5" cy="191.5" r="1.5" fill="#0a0a0a"/>
<path d="M222 170L222 191.5" stroke="#0a0a0a" stroke-width="2.1" stroke-linecap="round"/>
<circle cx="222" cy="170" r="1.5" fill="#0a0a0a"/><circle cx="222" cy="191.5" r="1.5" fill="#0a0a0a"/>
<path d="M225.5 170L225.5 191.5" stroke="#0a0a0a" stroke-width="2.1" stroke-linecap="round"/>
<circle cx="225.5" cy="170" r="1.5" fill="#0a0a0a"/><circle cx="225.5" cy="191.5" r="1.5" fill="#0a0a0a"/>
<path d="M648.3 138.6L648.3 174" stroke="#0a0a0a" stroke-width="2.4" stroke-linecap="round"/>
<circle cx="648.3" cy="138.6" r="1.6" fill="#0a0a0a"/><circle cx="648.3" cy="174" r="1.6" fill="#0a0a0a"/>
<path d="M657.8 147.3L657.8 175" stroke="#0a0a0a" stroke-width="1.8" stroke-linecap="round"/>
<circle cx="657.8" cy="147.3" r="1.6" fill="#0a0a0a"/><circle cx="657.8" cy="175" r="1.6" fill="#0a0a0a"/>
<path d="M665.1 148.2L665.1 176" stroke="#0a0a0a" stroke-width="2.1" stroke-linecap="round"/>
<circle cx="665.1" cy="148.2" r="1.6" fill="#0a0a0a"/><circle cx="665.1" cy="176" r="1.6" fill="#0a0a0a"/>
<path d="M666.8 150L666.8 171" stroke="#0a0a0a" stroke-width="1.6" stroke-linecap="round"/>
<circle cx="666.8" cy="150" r="1.6" fill="#0a0a0a"/><circle cx="666.8" cy="171" r="1.6" fill="#0a0a0a"/>
<path d="M672.2 154L672.2 173" stroke="#0a0a0a" stroke-width="1.8" stroke-linecap="round"/>
<circle cx="672.2" cy="154" r="1.6" fill="#0a0a0a"/><circle cx="672.2" cy="173" r="1.6" fill="#0a0a0a"/>
<path d="M677 152L677 173" stroke="#0a0a0a" stroke-width="2.1" stroke-linecap="round"/>
<circle cx="677" cy="152" r="1.6" fill="#0a0a0a"/><circle cx="677" cy="173" r="1.6" fill="#0a0a0a"/>
<path d="M678.8 152L678.8 173" stroke="#0a0a0a" stroke-width="1.4" stroke-linecap="round"/>
<circle cx="678.8" cy="152" r="1.6" fill="#0a0a0a"/><circle cx="678.8" cy="173" r="1.6" fill="#0a0a0a"/>
<path d="M683.7 153L683.7 171.2" stroke="#0a0a0a" stroke-width="1.8" stroke-linecap="round"/>
<circle cx="683.7" cy="153" r="1.6" fill="#0a0a0a"/><circle cx="683.7" cy="171.2" r="1.6" fill="#0a0a0a"/>
<path d="M686.2 153L686.2 171.2" stroke="#0a0a0a" stroke-width="1.8" stroke-linecap="round"/>
<circle cx="686.2" cy="153" r="1.6" fill="#0a0a0a"/><circle cx="686.2" cy="171.2" r="1.6" fill="#0a0a0a"/>
<path d="M414 185.5L414 204" stroke="#0a0a0a" stroke-width="1.8" stroke-linecap="round"/>
<circle cx="414" cy="185.5" r="1.6" fill="#0a0a0a"/><circle cx="414" cy="204" r="1.6" fill="#0a0a0a"/>
<path d="M425 205L438.9 210" stroke="#0a0a0a" stroke-width="1.8" stroke-linecap="round"/>
<circle cx="425" cy="205" r="1.6" fill="#0a0a0a"/><circle cx="438.9" cy="210" r="1.6" fill="#0a0a0a"/>
<path d="M475 185.5L475 204" stroke="#0a0a0a" stroke-width="1.8" stroke-linecap="round"/>
<circle cx="475" cy="185.5" r="1.6" fill="#0a0a0a"/><circle cx="475" cy="204" r="1.6" fill="#0a0a0a"/>
<path d="M449.5 210L464 205" stroke="#0a0a0a" stroke-width="1.8" stroke-linecap="round"/>
<circle cx="449.5" cy="210" r="1.6" fill="#0a0a0a"/><circle cx="464" cy="205" r="1.6" fill="#0a0a0a"/>
<path d="M415.8 279L415.8 317" stroke="#0a0a0a" stroke-width="1.8" stroke-linecap="round"/>
<circle cx="415.8" cy="279" r="1.6" fill="#0a0a0a"/><circle cx="415.8" cy="317" r="1.6" fill="#0a0a0a"/>
<circle cx="420.5" cy="308" r="1.5" fill="#0a0a0a"/>
<path d="M472.7 279L472.7 317" stroke="#0a0a0a" stroke-width="1.8" stroke-linecap="round"/>
<circle cx="472.7" cy="279" r="1.6" fill="#0a0a0a"/><circle cx="472.7" cy="317" r="1.6" fill="#0a0a0a"/>
<circle cx="468.3" cy="308" r="1.5" fill="#0a0a0a"/>
<path d="M415.8 436.7L415.8 474.7" stroke="#0a0a0a" stroke-width="1.8" stroke-linecap="round"/>
<circle cx="415.8" cy="436.7" r="1.6" fill="#0a0a0a"/><circle cx="415.8" cy="474.7" r="1.6" fill="#0a0a0a"/>
<path d="M472.6 436.7L472.6 474.7" stroke="#0a0a0a" stroke-width="1.8" stroke-linecap="round"/>
<circle cx="472.6" cy="436.7" r="1.6" fill="#0a0a0a"/><circle cx="472.6" cy="474.7" r="1.6" fill="#0a0a0a"/>
<path d="M416 605.5L416 644.6" stroke="#0a0a0a" stroke-width="2" stroke-linecap="round"/>
<circle cx="416" cy="605.5" r="1.6" fill="#0a0a0a"/><circle cx="416" cy="644.6" r="1.6" fill="#0a0a0a"/>
<circle cx="416" cy="609" r="1.5" fill="#0a0a0a"/><circle cx="416" cy="641" r="1.5" fill="#0a0a0a"/>
<path d="M472.6 605.5L472.6 644.6" stroke="#0a0a0a" stroke-width="2" stroke-linecap="round"/>
<circle cx="472.6" cy="605.5" r="1.6" fill="#0a0a0a"/><circle cx="472.6" cy="644.6" r="1.6" fill="#0a0a0a"/>
<circle cx="472.6" cy="609" r="1.5" fill="#0a0a0a"/><circle cx="472.6" cy="641" r="1.5" fill="#0a0a0a"/>
<path d="M444.2 617.7L444.2 656" stroke="#0a0a0a" stroke-width="1.6" stroke-linecap="round"/>
<circle cx="444.2" cy="618" r="1.5" fill="#0a0a0a"/></g></svg>
<div class="a" style="left:2px;top:35px;width:884px;height:22px;background:rgba(47,47,47,0.94);border-radius:0px;border-radius:5px 5px 0 0;border-top:1px solid #3c3c3c"></div>
<div class="a" style="left:2px;top:57px;width:238px;height:16px;background:rgba(46,46,46,0.92);border-radius:0px;border-radius:0 0 4px 0"></div>
<div class="a" style="left:9px;top:38px;width:23px;height:13px;background:#262626;border-radius:3px;"></div>
<div class="a" style="left:38px;top:38px;width:84px;height:13px;background:#262626;border-radius:3px;"></div>
<div class="a" style="left:360px;top:38px;width:41px;height:13px;background:#262626;border-radius:3px;"></div>
<div class="a" style="left:408px;top:38px;width:23px;height:13px;background:#262626;border-radius:3px;"></div>
<div class="a" style="left:435px;top:37px;width:16px;height:15px;background:#4e4e4e;border-radius:3px;"></div>
<div class="a" style="left:454px;top:38px;width:31px;height:13px;background:#262626;border-radius:3px;"></div>
<div class="a" style="left:490px;top:37px;width:15px;height:15px;background:#4e4e4e;border-radius:3px;"></div>
<div class="a" style="left:686px;top:38px;width:23px;height:13px;background:#262626;border-radius:3px;"></div>
<div class="a" style="left:715px;top:37px;width:15px;height:15px;background:#4772b3;border-radius:3px;"></div>
<div class="a" style="left:731px;top:38px;width:11px;height:13px;background:#262626;border-radius:3px;"></div>
<div class="a" style="left:750px;top:37px;width:15px;height:15px;background:#4772b3;border-radius:3px;"></div>
<div class="a" style="left:766px;top:38px;width:11px;height:13px;background:#262626;border-radius:3px;"></div>
<div class="a" style="left:786px;top:37px;width:13px;height:15px;background:#353535;border-radius:3px;"></div>
<div class="a" style="left:804px;top:37px;width:60px;height:15px;background:#4e4e4e;border-radius:3px;"></div>
<div class="a" style="left:849px;top:37px;width:15px;height:15px;background:#4772b3;border-radius:0px;border-radius:0 3px 3px 0"></div>
<div class="a" style="left:865px;top:38px;width:14px;height:13px;background:#262626;border-radius:3px;"></div>
<div class="a" style="left:60px;top:58px;width:76px;height:14px;background:#262626;border-radius:3px;"></div>
<div class="a" style="left:175px;top:58px;width:63px;height:14px;background:#262626;border-radius:3px;"></div>
<div class="a" style="left:829.5px;top:58px;width:49.5px;height:14px;background:rgba(30,30,30,0.85);border-radius:3px;"></div>
<div class="a" style="left:8px;top:82px;width:30px;height:25px;background:rgba(30,30,30,0.78);border-radius:3px;border-radius:3px 3px 0 0"></div>
<div class="a" style="left:8px;top:107.5px;width:30px;height:28.5px;background:rgba(30,30,30,0.78);border-radius:0px;border-radius:0 0 3px 3px"></div>
<div class="a" style="left:8px;top:139px;width:30px;height:26px;background:#4772b3;border-radius:3px;border-radius:3px 3px 0 0"></div>
<div class="a" style="left:8px;top:165px;width:30px;height:54px;background:rgba(30,30,30,0.78);border-radius:0px;"></div>
<div class="a" style="left:8px;top:219px;width:30px;height:25.5px;background:rgba(30,30,30,0.78);border-radius:0px;border-radius:0 0 3px 3px"></div>
<div class="a" style="left:8px;top:251px;width:30px;height:25px;background:rgba(30,30,30,0.78);border-radius:3px;border-radius:3px 3px 0 0"></div>
<div class="a" style="left:8px;top:276px;width:30px;height:26px;background:rgba(30,30,30,0.78);border-radius:0px;border-radius:0 0 3px 3px"></div>
<div class="a" style="left:8px;top:308px;width:30px;height:27px;background:rgba(30,30,30,0.78);border-radius:3px;"></div>
<div class="a" style="left:8px;top:107px;width:30px;height:1px;background:rgba(60,60,60,0.6);border-radius:0px;"></div>
<div class="a" style="left:8px;top:165px;width:30px;height:1px;background:rgba(60,60,60,0.6);border-radius:0px;"></div>
<div class="a" style="left:8px;top:192px;width:30px;height:1px;background:rgba(60,60,60,0.6);border-radius:0px;"></div>
<div class="a" style="left:8px;top:219px;width:30px;height:1px;background:rgba(60,60,60,0.6);border-radius:0px;"></div>
<div class="a" style="left:8px;top:276px;width:30px;height:1px;background:rgba(60,60,60,0.6);border-radius:0px;"></div>
<div class="a" style="left:889px;top:17px;width:47px;height:15px;background:#2a2a2a;border-radius:4px;"></div>
<div class="a" style="left:889px;top:17px;width:15px;height:15px;background:#555555;border-radius:0px;border-radius:4px 0 0 4px"></div>
<div class="a" style="left:940px;top:17px;width:133px;height:15px;background:#2a2a2a;border-radius:4px;"></div>
<div class="a" style="left:965px;top:17px;width:77px;height:15px;background:#1e1e1e;border-radius:0px;"></div>
<div class="a" style="left:1042.7px;top:17px;width:15.3px;height:15px;background:#4e4e4e;border-radius:0px;"></div>
<div class="a" style="left:1058px;top:17px;width:15px;height:15px;background:#353535;border-radius:0px;border-radius:0 4px 4px 0"></div>
<div class="a" style="left:1078.7px;top:17px;width:117.3px;height:15px;background:#2a2a2a;border-radius:4px;"></div>
<div class="a" style="left:1102px;top:17px;width:63px;height:15px;background:#1e1e1e;border-radius:0px;"></div>
<div class="a" style="left:1165px;top:17px;width:16px;height:15px;background:#4e4e4e;border-radius:0px;"></div>
<div class="a" style="left:1181px;top:17px;width:15px;height:15px;background:#353535;border-radius:0px;border-radius:0 4px 4px 0"></div>
<div id="outl" class="a"></div>
<div class="a" style="left:895.7px;top:37.5px;width:24px;height:14px;background:#262626;border-radius:3px;"></div>
<div class="a" style="left:925px;top:37.5px;width:23px;height:14px;background:#262626;border-radius:3px;"></div>
<div class="a" style="left:990px;top:38px;width:90px;height:13.3px;background:#1e1e1e;border-radius:3px;"></div>
<div class="a" style="left:1148.7px;top:37.5px;width:24.3px;height:14px;background:#262626;border-radius:3px;"></div>
<div class="a" style="left:1177px;top:37.5px;width:15px;height:14px;background:#4e4e4e;border-radius:3px;"></div>
<div class="a" style="left:920px;top:87.6px;width:15.7px;height:14.2px;background:#3d3d3d;border-radius:3px;border:1px solid #595959"></div>
<div class="a" style="left:911px;top:104.5px;width:1.2px;height:88px;background:#8c4a8c;border-radius:0px;"></div>
<div class="a" style="left:927px;top:120.5px;width:1.2px;height:56px;background:#8c4a8c;border-radius:0px;"></div>
<div class="a" style="left:936px;top:181.5px;width:15px;height:13px;background:#4a4a4a;border-radius:3px;"></div>
<div id="props" class="a"></div>
<div class="a" style="left:888px;top:319.5px;width:23px;height:336.5px;background:#1d1d1d;border-radius:0px;border-radius:0 0 0 5px"></div>
<div class="a" style="left:889px;top:319.5px;width:22px;height:27px;background:#212121;border-radius:0px;"></div>
<div class="a" style="left:889px;top:468px;width:22px;height:20.5px;background:#303030;border-radius:0px;border-radius:4px 0 0 4px"></div>
<div class="a" style="left:895px;top:301px;width:20px;height:15px;background:#262626;border-radius:3px;"></div>
<div class="a" style="left:998.8px;top:302px;width:90.2px;height:12.8px;background:#1e1e1e;border-radius:3px;"></div>
<div class="a" style="left:1177px;top:301px;width:15px;height:14px;background:#262626;border-radius:3px;"></div>
<div class="a" style="left:917px;top:348.2px;width:275.4px;height:19px;background:#3a3a3a;border-radius:4px;"></div>
<div class="a" style="left:917px;top:368.9px;width:275.4px;height:19px;background:#3a3a3a;border-radius:4px;"></div>
<div class="a" style="left:917px;top:389.59999999999997px;width:275.4px;height:19px;background:#3a3a3a;border-radius:4px;"></div>
<div class="a" style="left:917px;top:410.29999999999995px;width:275.4px;height:19px;background:#3a3a3a;border-radius:4px;"></div>
<div class="a" style="left:917px;top:431.0px;width:275.4px;height:19px;background:#3a3a3a;border-radius:4px;"></div>
<div class="a" style="left:1164px;top:660px;width:1px;height:11px;background:#8a8a8a;border-radius:0px;"></div>
<svg width="1200" height="675"><g transform="translate(2,2)"><path d="M1 6.5l4-3M2 4l3.5 0" stroke="#e87d0d" stroke-width="1.6"/><circle cx="6.5" cy="6" r="3.6" fill="#e87d0d"/><circle cx="6.7" cy="6" r="1.9" fill="#fff"/><circle cx="6.7" cy="6" r="1.1" fill="#265787"/></g>
<path d="M1125 7h6" stroke="#ccc" stroke-width="1"/>
<rect x="1152" y="3.5" width="6" height="6" rx="1.2" fill="none" stroke="#ccc" stroke-width="1"/><path d="M1154 2.5h4.5v4.5" fill="none" stroke="#ccc" stroke-width="0.8"/>
<path d="M1179 3.5l6 6M1185 3.5l-6 6" stroke="#ccc" stroke-width="1"/>
<g transform="translate(4,19)"><circle cx="8" cy="6" r="4.6" fill="none" stroke="#e6e6e6" stroke-width="1.7"/><circle cx="8.2" cy="6" r="1.8" fill="#e6e6e6"/><path d="M0.8 8.8l5-3.6M2 3.8h5" stroke="#e6e6e6" stroke-width="1.6" stroke-linecap="round"/></g>
<path d="M260 24.5h8M264 20.5v8" stroke="#6a6a6a" stroke-width="1"/>
<g stroke="#d0d0d0" stroke-width="1.2" fill="none"><path d="M12.5 46.5h9M12.5 49.5h9M14.5 44v7.5M19 44v7.5"/></g><circle cx="20.5" cy="42.3" r="2.7" fill="#e4e4e4"/>
<path d="M26.0 43.8l2.5 2.5 2.5-2.5" stroke="#bdbdbd" fill="none" stroke-width="1.1"/>
<path d="M41 43v-2.5h2.5M51.5 40.5h2.5v2.5M54 48v2.5h-2.5M43.5 50.5H41V48" stroke="#8a8a8a" fill="none" stroke-width="1.1"/><rect x="43.5" y="42" width="8" height="7" fill="#e8e8e8"/>
<path d="M116.0 43.8l2.5 2.5 2.5-2.5" stroke="#bdbdbd" fill="none" stroke-width="1.1"/>
<path d="M349 41.5h-4v8.5h4M346.5 45.5h8M352.5 43.5l2 2-2 2" stroke="#9c9c9c" fill="none" stroke-width="1.1"/><circle cx="348" cy="45.5" r="1.2" fill="#9c9c9c"/>
<path d="M394.5 43.8l2.5 2.5 2.5-2.5" stroke="#bdbdbd" fill="none" stroke-width="1.1"/>
<path d="M410.5 43v-2.5h2.5M418 40.5h2.5V43M420.5 48v2.5H418M413 50.5h-2.5V48" stroke="#c4c4c4" fill="none" stroke-width="1"/><circle cx="415.5" cy="45.5" r="1.4" fill="#eee"/>
<path d="M423.5 43.8l2.5 2.5 2.5-2.5" stroke="#bdbdbd" fill="none" stroke-width="1.1"/>
<path d="M438.3 44.3l2.2-2.2a3.6 3.6 0 0 1 5.1 5.1l-2.2 2.2" stroke="#b8b8b8" stroke-width="3.4" fill="none" stroke-linecap="round"/><path d="M438.3 44.3l2.2-2.2a3.6 3.6 0 0 1 5.1 5.1l-2.2 2.2" stroke="#4e4e4e" stroke-width="1.4" fill="none" stroke-linecap="round"/>
<path d="M478.0 43.8l2.5 2.5 2.5-2.5" stroke="#bdbdbd" fill="none" stroke-width="1.1"/>
<circle cx="497.5" cy="44.5" r="4.2" fill="none" stroke="#8c8c8c" stroke-width="1.4"/><circle cx="497.5" cy="44.5" r="1.7" fill="#f0f0f0"/>
<path d="M510 50.5c2.5-1 3-9 5.2-9s2.7 8 5.2 9" stroke="#5e5e5e" fill="none" stroke-width="1"/>
<path d="M522.0 43.8l2.5 2.5 2.5-2.5" stroke="#4a4a4a" fill="none" stroke-width="1.1"/>
<path d="M690 42.2q4.3-4.2 8.6 0q-4.3 4.2-8.6 0z" fill="none" stroke="#e0e0e0" stroke-width="1.3"/><circle cx="694.3" cy="42.2" r="1.6" fill="none" stroke="#bdbdbd" stroke-width="0.8"/><circle cx="694.3" cy="42.2" r="0.8" fill="#eee"/><path d="M687.8 44.3l6.2 3-3 .8-.9 3z" fill="#e8e8e8"/>
<path d="M702.0 43.8l2.5 2.5 2.5-2.5" stroke="#bdbdbd" fill="none" stroke-width="1.1"/>
<path d="M718.5 49.5c1-4 4-7.5 8.5-8.5M724.5 40.5h3.5v3.5M720.5 44.5l3 3" stroke="#fff" fill="none" stroke-width="1.2"/><circle cx="718.8" cy="49.3" r="1.3" fill="#fff"/>
<path d="M734.0 43.8l2.5 2.5 2.5-2.5" stroke="#bdbdbd" fill="none" stroke-width="1.1"/>
<circle cx="758.8" cy="43.2" r="3.7" fill="#fff"/><circle cx="757.7" cy="44.4" r="1.4" fill="#4772b3"/><path d="M753.6 45.2a4.6 4.6 0 0 0 6.8 3.9" stroke="#fff" fill="none" stroke-width="1.2"/>
<path d="M769.0 43.8l2.5 2.5 2.5-2.5" stroke="#bdbdbd" fill="none" stroke-width="1.1"/>
<rect x="789" y="41" width="7" height="8" rx="1" fill="none" stroke="#4e4e4e" stroke-width="1"/><path d="M789 45h7M792.5 41v8" stroke="#4e4e4e" stroke-width="0.8"/>
<g stroke="#d8d8d8" fill="none" stroke-width="1"><circle cx="811.5" cy="44.5" r="4.3"/><path d="M807.2 44.5h8.6M811.5 40.2v8.6"/><ellipse cx="811.5" cy="44.5" rx="2.1" ry="4.3"/></g>
<circle cx="826.5" cy="44.5" r="4.6" fill="#c8c8c8"/>
<circle cx="841.5" cy="44.5" r="4.3" fill="none" stroke="#d8d8d8" stroke-width="1.1"/><path d="M841.5 40.2v4.3h4.3a4.3 4.3 0 0 0-4.3-4.3z" fill="#e6e6e6"/><path d="M837.3 45a4.3 4.3 0 0 0 8.4 0h-4.2v-0z" fill="#9a9a9a"/>
<circle cx="856.5" cy="44.5" r="4.3" fill="none" stroke="#fff" stroke-width="1.4"/><path d="M853.5 43a3 3 0 0 1 2-2" stroke="#fff" stroke-width="1"/>
<path d="M869.5 43.8l2.5 2.5 2.5-2.5" stroke="#bdbdbd" fill="none" stroke-width="1.1"/>
<circle cx="67.5" cy="66.5" r="1.7" fill="#e0e0e0"/><path d="M67.5 64v-4.5M66 61l1.5-1.5L69 61M70 66.5h4.5M73 65l1.5 1.5L73 68M66 68l-2.3 2.3" stroke="#bdbdbd" fill="none" stroke-width="0.9"/>
<path d="M129.5 64.3l2.5 2.5 2.5-2.5" stroke="#bdbdbd" fill="none" stroke-width="1.1"/>
<path d="M231.0 64.3l2.5 2.5 2.5-2.5" stroke="#bdbdbd" fill="none" stroke-width="1.1"/>
<path d="M871.5 64.3l2.5 2.5 2.5-2.5" stroke="#bdbdbd" fill="none" stroke-width="1.1"/>
<path d="M883.5 96l-2.5 3.2 2.5 3.2" stroke="#a0a0a0" fill="none" stroke-width="1"/>
<rect x="14.5" y="85.5" width="17" height="17" rx="1" fill="none" stroke="#d49a3a" stroke-width="1.5" stroke-dasharray="2.2 1.8"/><path d="M20.5 89.5v9.5l2.3-2.3 2 3.3 1-.6-2-3.3 3.3-.3z" fill="#e8e8e8"/>
<path d="M36 104.5l-2.5 2.5h2.5z" fill="#8a8a8a"/>
<circle cx="23" cy="121" r="8.3" fill="none" stroke="#eaeaea" stroke-width="1.5"/><circle cx="23" cy="121" r="8.3" fill="none" stroke="#b02a30" stroke-width="1.5" stroke-dasharray="2.6 2.6"/><path d="M23 114.5v4M23 123.5v4M16.5 121h4M25.5 121h4" stroke="#bdbdbd" stroke-width="1.2"/>
<g fill="#fff"><path d="M23 143.5l-2.6 3.2h5.2z"/><path d="M23 160.5l-2.6-3.2h5.2z"/><path d="M14.5 152l3.2-2.6v5.2z"/><path d="M31.5 152l-3.2-2.6v5.2z"/></g><path d="M23 147v2.5M23 154.5v2.5M18 152h2.5M25.5 152h2.5" stroke="#fff" stroke-width="1"/>
<path d="M16.5 176a7 7 0 0 1 12.5-3.5M29.5 181.5a7 7 0 0 1-12.5 3.5" stroke="#e0e0e0" fill="none" stroke-width="1.2"/><path d="M14 177.5h5l-2.5 3z" fill="#f0f0f0"/><path d="M32 180h-5l2.5-3z" fill="#f0f0f0"/><path d="M23 175.5l3.2 3.2-3.2 3.2-3.2-3.2z" fill="#bdbdbd"/>
<rect x="16.5" y="199.5" width="13" height="12.5" fill="none" stroke="#a0a0a0" stroke-width="1.1"/><rect x="16" y="205" width="7.5" height="7.5" fill="#eaeaea"/><path d="M24 205l4-4M25.5 200.5h3v3" stroke="#dadada" fill="none" stroke-width="1.2"/>
<path d="M36 215.5l-2.5 2.5h2.5z" fill="#8a8a8a"/>
<circle cx="23" cy="232.2" r="7.6" fill="none" stroke="#cfcfcf" stroke-width="1" stroke-dasharray="4 2"/><rect x="19.6" y="228.8" width="6.8" height="6.8" fill="#ececec"/><g fill="#e0e0e0"><path d="M23 223.5l-2 2.3h4z"/><path d="M23 241l-2-2.3h4z"/><path d="M14.3 232.2l2.3-2v4z"/><path d="M31.7 232.2l-2.3-2v4z"/></g>
<path d="M25.5 256l-9.5 10" stroke="#e0e0e0" stroke-width="2.6" stroke-linecap="round"/><path d="M15.2 267.5l-1 1.3" stroke="#e0e0e0" stroke-width="1.2"/><path d="M14.5 270.5c3-1 4.5-4 7-4s3 3.5 6 3.5c2 0 3-1.5 4-3" stroke="#5fcf9a" fill="none" stroke-width="1.1"/>
<path d="M36 271.5l-2.5 2.5h2.5z" fill="#8a8a8a"/>
<path d="M21 298.5a9 9 0 0 0-4.5-8v8z" fill="none"/><path d="M18 297.5v-8.5a9 9 0 0 1 9.5 8.5z" fill="#6fd6a2"/><path d="M17 281.5v17h15" stroke="#d8d8d8" fill="none" stroke-width="2"/>
<path d="M16 311v5.5M13.3 313.7h5.5" stroke="#6fd6a2" stroke-width="1.4"/><path d="M18 319.5h8.5v10H18zM18 319.5l3-3h8.5l-3 3M29.5 316.5v10l-3 3" stroke="#6fd6a2" fill="none" stroke-width="1"/>
<path d="M36 331.5l-2.5 2.5h2.5z" fill="#8a8a8a"/>
<circle cx="896.5" cy="24.5" r="5" fill="#e6e6e6"/><path d="M897.5 21.5l-2.2 3 2.2 3" stroke="#555" fill="none" stroke-width="1.3"/>
<path d="M928.5 23.8l2.5 2.5 2.5-2.5" stroke="#bdbdbd" fill="none" stroke-width="1.1"/>
<path d="M946.5 20l-3.5 7.5h6z" fill="#dcdcdc"/><circle cx="953" cy="19.8" r="1.6" fill="#e8e8e8"/><circle cx="950.5" cy="27.5" r="3" fill="none" stroke="#dcdcdc" stroke-width="1.1"/>
<path d="M957.5 23.8l2.5 2.5 2.5-2.5" stroke="#bdbdbd" fill="none" stroke-width="1.1"/>
<path d="M1029.5 29.5l4-4M1031 22.5l4.5 4.5M1032.5 21l4.5 4.5-2.5.5-2.5-2.5z" stroke="#9a9a9a" fill="none" stroke-width="1"/>
<rect x="1046" y="22" width="6" height="7" rx="1" fill="none" stroke="#d0d0d0" stroke-width="1"/><path d="M1048.5 22v-2.5h4.5l2 2v5.5h-2" stroke="#d0d0d0" fill="none" stroke-width="1"/>
<path d="M1062.5 21.5l6 6M1068.5 21.5l-6 6" stroke="#5a5a5a" stroke-width="1"/>
<rect x="1083" y="22" width="8" height="8" rx="1" fill="#8a8a8a"/><rect x="1085" y="20" width="8" height="8" rx="1" fill="#dcdcdc" stroke="#2a2a2a" stroke-width="0.8"/><path d="M1086 27l2.5-4 2.5 4z" fill="#333"/>
<path d="M1094.5 23.8l2.5 2.5 2.5-2.5" stroke="#bdbdbd" fill="none" stroke-width="1.1"/>
<rect x="1169" y="22" width="6" height="7" rx="1" fill="none" stroke="#d0d0d0" stroke-width="1"/><path d="M1171.5 22v-2.5h4.5l2 2v5.5h-2" stroke="#d0d0d0" fill="none" stroke-width="1"/>
<path d="M1185.5 21.5l6 6M1191.5 21.5l-6 6" stroke="#5a5a5a" stroke-width="1"/>
<rect x="899" y="40" width="4" height="2.3" rx="0.8" fill="#e0e0e0"/><path d="M900.5 42.3v7h2M900.5 45.5h2" stroke="#bbb" fill="none" stroke-width="0.9"/><rect x="903" y="44.3" width="5" height="2.4" rx="0.8" fill="#e0e0e0"/><rect x="903" y="48" width="5" height="2.4" rx="0.8" fill="#e0e0e0"/>
<path d="M912.0 43.8l2.5 2.5 2.5-2.5" stroke="#bdbdbd" fill="none" stroke-width="1.1"/>
<rect x="927.5" y="42" width="8" height="8" rx="1" fill="#777"/><rect x="929.5" y="40" width="8" height="8" rx="1" fill="#e0e0e0" stroke="#262626" stroke-width="0.7"/><path d="M930.5 47l2.5-4 2.5 4z" fill="#333"/>
<path d="M941.0 43.8l2.5 2.5 2.5-2.5" stroke="#bdbdbd" fill="none" stroke-width="1.1"/>
<circle cx="995.5" cy="43.5" r="3.2" fill="none" stroke="#cfcfcf" stroke-width="1.1"/><path d="M997.8 45.8l3 3" stroke="#cfcfcf" stroke-width="1.2"/>
<path d="M1150.5 40.5h9.5l-3.8 4.5v4.5l-2-1.5v-3z" fill="none" stroke="#d6d6d6" stroke-width="1" stroke-linejoin="round"/>
<path d="M1165.0 43.8l2.5 2.5 2.5-2.5" stroke="#bdbdbd" fill="none" stroke-width="1.1"/>
<rect x="1180" y="42" width="7" height="7" fill="none" stroke="#bdbdbd" stroke-width="0.9"/><path d="M1180 44h3M1182 46.5h3" stroke="#bdbdbd" stroke-width="0.9"/><circle cx="1187.5" cy="41.5" r="2.6" fill="#4e4e4e" stroke="#e0e0e0" stroke-width="0.9"/><path d="M1186 41.5h3M1187.5 40v3" stroke="#e0e0e0" stroke-width="0.8"/>
<rect x="906.8" y="58.8" width="10.2" height="2.4" fill="#e8e8e8"/><rect x="907.5999999999999" y="61.9" width="8.6" height="6.3" fill="#e8e8e8"/><rect x="910.4" y="63.0" width="3" height="1.4" fill="#282828"/>
<path d="M910.6999999999999 76.8l2.6 2.8-2.6 2.8" stroke="#bdbdbd" fill="none" stroke-width="1.1"/>
<rect x="922" y="74.5" width="11" height="2.4" fill="#a0613f"/><rect x="922.8" y="77.6" width="9.4" height="6.4" fill="#a0613f"/><rect x="926.0" y="78.8" width="3" height="1.4" fill="#3a2418"/>
<circle cx="985.5" cy="77.5" r="4" fill="#e0883a"/><rect x="983.5" y="81" width="4" height="3.3" rx="1" fill="#e0883a"/><path d="M984 76.5l1.5 2 1.5-2" stroke="#5a3010" fill="none" stroke-width="0.8"/>
<circle cx="997.5" cy="76.8" r="2.6" fill="#e0883a"/><circle cx="1003" cy="76.8" r="2.6" fill="#e0883a"/><rect x="995" y="79.3" width="9.5" height="5" rx="1" fill="#e0883a"/><path d="M1004.5 81.8l3-2v4.5z" fill="#e0883a"/><circle cx="997.5" cy="76.8" r="1" fill="#3a2418"/><circle cx="1003" cy="76.8" r="1" fill="#3a2418"/>
<path d="M909.4 93.7l2.5 2.5 2.5-2.5" stroke="#bdbdbd" fill="none" stroke-width="1.1"/>
<rect x="922" y="90" width="11" height="2.5" fill="#d26ad2"/><rect x="922.8" y="93.3" width="9.4" height="6.7" fill="#d26ad2"/><rect x="926.0" y="94.5" width="3" height="1.4" fill="#4a1f4a"/>
<path d="M942 95.5v3.5h9.5v-3.5M946.8 97.5v-7.5M944.3 92.5l2.5-2.5 2.5 2.5" stroke="#bdbdbd" fill="none" stroke-width="1"/>
<path d="M925.0 109.3l2.5 2.5 2.5-2.5" stroke="#bdbdbd" fill="none" stroke-width="1.1"/>
<rect x="938" y="105.5" width="10.6" height="2.5" fill="#d26ad2"/><rect x="938.8" y="108.7" width="9.0" height="6.6" fill="#d26ad2"/><rect x="941.8" y="109.9" width="3" height="1.4" fill="#4a1f4a"/>
<path d="M942.0999999999999 123.7l2.6 2.8-2.6 2.8" stroke="#bdbdbd" fill="none" stroke-width="1.1"/>
<path d="M954 122.3h9l-4.50 8.5z" fill="none" stroke="#e08a3c" stroke-width="2.2" stroke-linejoin="round"/>
<path transform="translate(1037.5,120.5)" d="M1.2 10.2l5.3-5.3a2.8 2.8 0 0 1 .8-3.6l1.2-.6-.3 2.2 1.2 1.2 2.2-.3-.6 1.2a2.8 2.8 0 0 1-3.6.8l-5.3 5.3a1 1 0 0 1-1.4 0l.1-.1a1 1 0 0 1 0-1.4z" fill="none" stroke="#6b7fd9" stroke-width="1.1" stroke-linejoin="round"/>
<rect x="1052.9" y="122.6" width="3.2" height="3" rx="0.5" fill="#dadada"/><rect x="1052.9" y="126.7" width="3.2" height="3" rx="0.5" fill="#dadada"/><rect x="1057.5" y="124.7" width="3.2" height="3" rx="0.5" fill="#dadada"/><rect x="1057.5" y="128.9" width="3.2" height="3" rx="0.5" fill="#dadada"/><rect x="1057.9" y="120.60000000000001" width="2.5" height="2.3" fill="none" stroke="#9a9a9a" stroke-width="0.8"/><rect x="1061.5" y="123.7" width="2.5" height="2.3" fill="none" stroke="#9a9a9a" stroke-width="0.8"/><rect x="1061.5" y="127.4" width="2.5" height="2.3" fill="none" stroke="#9a9a9a" stroke-width="0.8"/>
<path d="M1070.5 123.0h8l-4 7.5z" fill="none" stroke="#22b08a" stroke-width="1.2"/><circle cx="1070.5" cy="123.0" r="1.7" fill="#282828" stroke="#22b08a" stroke-width="1"/><circle cx="1078.5" cy="123.0" r="1.7" fill="#282828" stroke="#22b08a" stroke-width="1"/><circle cx="1074.5" cy="130.5" r="1.7" fill="#282828" stroke="#22b08a" stroke-width="1"/>
<path d="M942.0999999999999 139.29999999999998l2.6 2.8-2.6 2.8" stroke="#bdbdbd" fill="none" stroke-width="1.1"/>
<path d="M954 137.9h9l-4.50 8.5z" fill="none" stroke="#e08a3c" stroke-width="2.2" stroke-linejoin="round"/>
<path transform="translate(1009,136.1)" d="M1.2 10.2l5.3-5.3a2.8 2.8 0 0 1 .8-3.6l1.2-.6-.3 2.2 1.2 1.2 2.2-.3-.6 1.2a2.8 2.8 0 0 1-3.6.8l-5.3 5.3a1 1 0 0 1-1.4 0l.1-.1a1 1 0 0 1 0-1.4z" fill="none" stroke="#6b7fd9" stroke-width="1.1" stroke-linejoin="round"/>
<rect x="1024.4" y="138.2" width="3.2" height="3" rx="0.5" fill="#dadada"/><rect x="1024.4" y="142.29999999999998" width="3.2" height="3" rx="0.5" fill="#dadada"/><rect x="1029" y="140.29999999999998" width="3.2" height="3" rx="0.5" fill="#dadada"/><rect x="1029" y="144.5" width="3.2" height="3" rx="0.5" fill="#dadada"/><rect x="1029.4" y="136.2" width="2.5" height="2.3" fill="none" stroke="#9a9a9a" stroke-width="0.8"/><rect x="1033.0" y="139.3" width="2.5" height="2.3" fill="none" stroke="#9a9a9a" stroke-width="0.8"/><rect x="1033.0" y="143.0" width="2.5" height="2.3" fill="none" stroke="#9a9a9a" stroke-width="0.8"/>
<path d="M1042 138.6h8l-4 7.5z" fill="none" stroke="#22b08a" stroke-width="1.2"/><circle cx="1042" cy="138.6" r="1.7" fill="#282828" stroke="#22b08a" stroke-width="1"/><circle cx="1050" cy="138.6" r="1.7" fill="#282828" stroke="#22b08a" stroke-width="1"/><circle cx="1046" cy="146.1" r="1.7" fill="#282828" stroke="#22b08a" stroke-width="1"/>
<path d="M942.0999999999999 154.89999999999998l2.6 2.8-2.6 2.8" stroke="#bdbdbd" fill="none" stroke-width="1.1"/>
<path d="M954 153.5h9l-4.50 8.5z" fill="none" stroke="#e08a3c" stroke-width="2.2" stroke-linejoin="round"/>
<path transform="translate(1004,151.7)" d="M1.2 10.2l5.3-5.3a2.8 2.8 0 0 1 .8-3.6l1.2-.6-.3 2.2 1.2 1.2 2.2-.3-.6 1.2a2.8 2.8 0 0 1-3.6.8l-5.3 5.3a1 1 0 0 1-1.4 0l.1-.1a1 1 0 0 1 0-1.4z" fill="none" stroke="#6b7fd9" stroke-width="1.1" stroke-linejoin="round"/>
<rect x="1020.4" y="153.79999999999998" width="3.2" height="3" rx="0.5" fill="#dadada"/><rect x="1020.4" y="157.89999999999998" width="3.2" height="3" rx="0.5" fill="#dadada"/><rect x="1025" y="155.89999999999998" width="3.2" height="3" rx="0.5" fill="#dadada"/><rect x="1025" y="160.1" width="3.2" height="3" rx="0.5" fill="#dadada"/><rect x="1025.4" y="151.79999999999998" width="2.5" height="2.3" fill="none" stroke="#9a9a9a" stroke-width="0.8"/><rect x="1029.0" y="154.9" width="2.5" height="2.3" fill="none" stroke="#9a9a9a" stroke-width="0.8"/><rect x="1029.0" y="158.6" width="2.5" height="2.3" fill="none" stroke="#9a9a9a" stroke-width="0.8"/>
<path d="M1037.5 154.2h8l-4 7.5z" fill="none" stroke="#22b08a" stroke-width="1.2"/><circle cx="1037.5" cy="154.2" r="1.7" fill="#282828" stroke="#22b08a" stroke-width="1"/><circle cx="1045.5" cy="154.2" r="1.7" fill="#282828" stroke="#22b08a" stroke-width="1"/><circle cx="1041.5" cy="161.7" r="1.7" fill="#282828" stroke="#22b08a" stroke-width="1"/>
<path d="M942.0999999999999 170.5l2.6 2.8-2.6 2.8" stroke="#bdbdbd" fill="none" stroke-width="1.1"/>
<path d="M954 169.10000000000002h9l-4.50 8.5z" fill="none" stroke="#e08a3c" stroke-width="2.2" stroke-linejoin="round"/>
<path transform="translate(1010.7,167.3)" d="M1.2 10.2l5.3-5.3a2.8 2.8 0 0 1 .8-3.6l1.2-.6-.3 2.2 1.2 1.2 2.2-.3-.6 1.2a2.8 2.8 0 0 1-3.6.8l-5.3 5.3a1 1 0 0 1-1.4 0l.1-.1a1 1 0 0 1 0-1.4z" fill="none" stroke="#6b7fd9" stroke-width="1.1" stroke-linejoin="round"/>
<rect x="1026.4" y="169.4" width="3.2" height="3" rx="0.5" fill="#dadada"/><rect x="1026.4" y="173.5" width="3.2" height="3" rx="0.5" fill="#dadada"/><rect x="1031" y="171.5" width="3.2" height="3" rx="0.5" fill="#dadada"/><rect x="1031" y="175.70000000000002" width="3.2" height="3" rx="0.5" fill="#dadada"/><rect x="1031.4" y="167.4" width="2.5" height="2.3" fill="none" stroke="#9a9a9a" stroke-width="0.8"/><rect x="1035.0" y="170.50000000000003" width="2.5" height="2.3" fill="none" stroke="#9a9a9a" stroke-width="0.8"/><rect x="1035.0" y="174.20000000000002" width="2.5" height="2.3" fill="none" stroke="#9a9a9a" stroke-width="0.8"/>
<path d="M1043.5 169.8h8l-4 7.5z" fill="none" stroke="#22b08a" stroke-width="1.2"/><circle cx="1043.5" cy="169.8" r="1.7" fill="#282828" stroke="#22b08a" stroke-width="1"/><circle cx="1051.5" cy="169.8" r="1.7" fill="#282828" stroke="#22b08a" stroke-width="1"/><circle cx="1047.5" cy="177.3" r="1.7" fill="#282828" stroke="#22b08a" stroke-width="1"/>
<path d="M926.3 186.2l2.6 2.8-2.6 2.8" stroke="#bdbdbd" fill="none" stroke-width="1.1"/>
<g stroke="#e08a3c" stroke-width="1.6" fill="none" stroke-linecap="round"><path d="M938.5 185.5l5 1.5 5-1.5M943.5 184v3.5l-3 5M943.5 187.5l3 5"/></g><circle cx="943.5" cy="183.5" r="1.3" fill="#e08a3c"/>
<g transform="translate(1010,183)" stroke="#22b08a" stroke-width="1.3" fill="none" stroke-linecap="round"><path d="M1 2.5l2.5 2 3-1 2.5 2.5M6.5 3.5l-2 4-3.5 3M4.5 7.5l3.5 1.5 1.5 2.5"/></g><circle cx="1016.5" cy="184.5" r="1.3" fill="#22b08a"/>
<g transform="translate(1025,183)" stroke="#22b08a" stroke-width="1.3" fill="none" stroke-linecap="round"><path d="M1 4l5 1 5-1M6 3v3.5l-3 4.5M6 6.5l3 4.5"/><circle cx="1.5" cy="3" r="1.3"/><circle cx="10.5" cy="3" r="1.3"/></g><circle cx="1031" cy="183.5" r="1.3" fill="#22b08a"/>
<path d="M1042 184.8h9l-4.50 8.5z" fill="none" stroke="#e08a3c" stroke-width="2.2" stroke-linejoin="round"/>
<text x="1052" y="193.5" font-size="6" fill="#cfcfcf" font-family="Liberation Sans">4</text>
<rect x="1116.8" y="75.3" width="8.4" height="8.4" rx="1" fill="#e6e6e6"/><path d="M1118.5 79.6l1.8 1.8 3.3-3.5" stroke="#1e1e1e" fill="none" stroke-width="1.3"/>
<path d="M1132.0 75.1l9 3.2-3.8 1.2-1.3 4.3z" fill="#e6e6e6"/>
<path d="M1146.8 79.6q5.2-5 10.4 0q-5.2 5-10.4 0z" fill="none" stroke="#e6e6e6" stroke-width="1.3"/><circle cx="1152" cy="79.6" r="1.4" fill="#e6e6e6"/>
<rect x="1162.0" y="75.1" width="11" height="7.5" rx="0.8" fill="#9a9a9a"/><rect x="1163.7" y="76.6" width="7.6" height="4.5" fill="#e6e6e6"/><rect x="1165.0" y="82.89999999999999" width="5" height="1.2" fill="#9a9a9a"/>
<rect x="1177.5" y="76.6" width="11" height="7.5" rx="0.8" fill="#e6e6e6"/><rect x="1180.5" y="75.1" width="5" height="2" fill="#e6e6e6"/><circle cx="1183" cy="80.39999999999999" r="2.6" fill="#282828"/><circle cx="1183" cy="80.39999999999999" r="1.3" fill="#9a9a9a"/>
<rect x="1116.8" y="90.9" width="8.4" height="8.4" rx="1" fill="#e6e6e6"/><path d="M1118.5 95.2l1.8 1.8 3.3-3.5" stroke="#1e1e1e" fill="none" stroke-width="1.3"/>
<path d="M1132.0 90.7l9 3.2-3.8 1.2-1.3 4.3z" fill="#e6e6e6"/>
<path d="M1146.8 95.2q5.2-5 10.4 0q-5.2 5-10.4 0z" fill="none" stroke="#e6e6e6" stroke-width="1.3"/><circle cx="1152" cy="95.2" r="1.4" fill="#e6e6e6"/>
<rect x="1162.0" y="90.7" width="11" height="7.5" rx="0.8" fill="#9a9a9a"/><rect x="1163.7" y="92.2" width="7.6" height="4.5" fill="#e6e6e6"/><rect x="1165.0" y="98.5" width="5" height="1.2" fill="#9a9a9a"/>
<rect x="1177.5" y="92.2" width="11" height="7.5" rx="0.8" fill="#e6e6e6"/><rect x="1180.5" y="90.7" width="5" height="2" fill="#e6e6e6"/><circle cx="1183" cy="96.0" r="2.6" fill="#282828"/><circle cx="1183" cy="96.0" r="1.3" fill="#9a9a9a"/>
<rect x="1116.8" y="106.5" width="8.4" height="8.4" rx="1" fill="#e6e6e6"/><path d="M1118.5 110.8l1.8 1.8 3.3-3.5" stroke="#1e1e1e" fill="none" stroke-width="1.3"/>
<path d="M1132.0 106.3l9 3.2-3.8 1.2-1.3 4.3z" fill="#e6e6e6"/>
<path d="M1146.8 110.8q5.2-5 10.4 0q-5.2 5-10.4 0z" fill="none" stroke="#e6e6e6" stroke-width="1.3"/><circle cx="1152" cy="110.8" r="1.4" fill="#e6e6e6"/>
<rect x="1162.0" y="106.3" width="11" height="7.5" rx="0.8" fill="#9a9a9a"/><rect x="1163.7" y="107.8" width="7.6" height="4.5" fill="#e6e6e6"/><rect x="1165.0" y="114.1" width="5" height="1.2" fill="#9a9a9a"/>
<rect x="1177.5" y="107.8" width="11" height="7.5" rx="0.8" fill="#e6e6e6"/><rect x="1180.5" y="106.3" width="5" height="2" fill="#e6e6e6"/><circle cx="1183" cy="111.6" r="2.6" fill="#282828"/><circle cx="1183" cy="111.6" r="1.3" fill="#9a9a9a"/>
<path d="M1132.0 122.0l9 3.2-3.8 1.2-1.3 4.3z" fill="#e6e6e6"/>
<path d="M1146.8 126.5q5.2-5 10.4 0q-5.2 5-10.4 0z" fill="none" stroke="#e6e6e6" stroke-width="1.3"/><circle cx="1152" cy="126.5" r="1.4" fill="#e6e6e6"/>
<rect x="1162.0" y="122.0" width="11" height="7.5" rx="0.8" fill="#9a9a9a"/><rect x="1163.7" y="123.5" width="7.6" height="4.5" fill="#e6e6e6"/><rect x="1165.0" y="129.8" width="5" height="1.2" fill="#9a9a9a"/>
<rect x="1177.5" y="123.5" width="11" height="7.5" rx="0.8" fill="#e6e6e6"/><rect x="1180.5" y="122.0" width="5" height="2" fill="#e6e6e6"/><circle cx="1183" cy="127.3" r="2.6" fill="#282828"/><circle cx="1183" cy="127.3" r="1.3" fill="#9a9a9a"/>
<path d="M1132.0 137.6l9 3.2-3.8 1.2-1.3 4.3z" fill="#e6e6e6"/>
<path d="M1146.8 142.1q5.2-5 10.4 0q-5.2 5-10.4 0z" fill="none" stroke="#e6e6e6" stroke-width="1.3"/><circle cx="1152" cy="142.1" r="1.4" fill="#e6e6e6"/>
<rect x="1162.0" y="137.6" width="11" height="7.5" rx="0.8" fill="#9a9a9a"/><rect x="1163.7" y="139.1" width="7.6" height="4.5" fill="#e6e6e6"/><rect x="1165.0" y="145.4" width="5" height="1.2" fill="#9a9a9a"/>
<rect x="1177.5" y="139.1" width="11" height="7.5" rx="0.8" fill="#e6e6e6"/><rect x="1180.5" y="137.6" width="5" height="2" fill="#e6e6e6"/><circle cx="1183" cy="142.9" r="2.6" fill="#282828"/><circle cx="1183" cy="142.9" r="1.3" fill="#9a9a9a"/>
<path d="M1132.0 153.2l9 3.2-3.8 1.2-1.3 4.3z" fill="#e6e6e6"/>
<path d="M1146.8 157.7q5.2-5 10.4 0q-5.2 5-10.4 0z" fill="none" stroke="#e6e6e6" stroke-width="1.3"/><circle cx="1152" cy="157.7" r="1.4" fill="#e6e6e6"/>
<rect x="1162.0" y="153.2" width="11" height="7.5" rx="0.8" fill="#9a9a9a"/><rect x="1163.7" y="154.7" width="7.6" height="4.5" fill="#e6e6e6"/><rect x="1165.0" y="161.0" width="5" height="1.2" fill="#9a9a9a"/>
<rect x="1177.5" y="154.7" width="11" height="7.5" rx="0.8" fill="#e6e6e6"/><rect x="1180.5" y="153.2" width="5" height="2" fill="#e6e6e6"/><circle cx="1183" cy="158.5" r="2.6" fill="#282828"/><circle cx="1183" cy="158.5" r="1.3" fill="#9a9a9a"/>
<path d="M1132.0 168.8l9 3.2-3.8 1.2-1.3 4.3z" fill="#e6e6e6"/>
<path d="M1146.8 173.3q5.2-5 10.4 0q-5.2 5-10.4 0z" fill="none" stroke="#e6e6e6" stroke-width="1.3"/><circle cx="1152" cy="173.3" r="1.4" fill="#e6e6e6"/>
<rect x="1162.0" y="168.8" width="11" height="7.5" rx="0.8" fill="#9a9a9a"/><rect x="1163.7" y="170.3" width="7.6" height="4.5" fill="#e6e6e6"/><rect x="1165.0" y="176.60000000000002" width="5" height="1.2" fill="#9a9a9a"/>
<rect x="1177.5" y="170.3" width="11" height="7.5" rx="0.8" fill="#e6e6e6"/><rect x="1180.5" y="168.8" width="5" height="2" fill="#e6e6e6"/><circle cx="1183" cy="174.10000000000002" r="2.6" fill="#282828"/><circle cx="1183" cy="174.10000000000002" r="1.3" fill="#9a9a9a"/>
<path d="M1132.0 184.5l9 3.2-3.8 1.2-1.3 4.3z" fill="#e6e6e6"/>
<path d="M1146.8 189q5.2-5 10.4 0q-5.2 5-10.4 0z" fill="none" stroke="#e6e6e6" stroke-width="1.3"/><circle cx="1152" cy="189" r="1.4" fill="#e6e6e6"/>
<rect x="1162.0" y="184.5" width="11" height="7.5" rx="0.8" fill="#9a9a9a"/><rect x="1163.7" y="186" width="7.6" height="4.5" fill="#e6e6e6"/><rect x="1165.0" y="192.3" width="5" height="1.2" fill="#9a9a9a"/>
<rect x="1177.5" y="186" width="11" height="7.5" rx="0.8" fill="#e6e6e6"/><rect x="1180.5" y="184.5" width="5" height="2" fill="#e6e6e6"/><circle cx="1183" cy="189.8" r="2.6" fill="#282828"/><circle cx="1183" cy="189.8" r="1.3" fill="#9a9a9a"/>
<rect x="897" y="302.5" width="10" height="5" rx="2.5" fill="#e6e6e6"/><circle cx="904.5" cy="305" r="1.4" fill="#262626"/><rect x="897" y="309" width="10" height="5" rx="2.5" fill="#e6e6e6"/><circle cx="899.5" cy="311.5" r="1.4" fill="#262626"/>
<path d="M908.0 306.8l2.5 2.5 2.5-2.5" stroke="#bdbdbd" fill="none" stroke-width="1.1"/>
<circle cx="1006" cy="307.5" r="3.2" fill="none" stroke="#cfcfcf" stroke-width="1.1"/><path d="M1008.3 309.8l3 3" stroke="#cfcfcf" stroke-width="1.2"/>
<path d="M1182.0 307.3l2.5 2.5 2.5-2.5" stroke="#d0d0d0" fill="none" stroke-width="1.1"/>
<path d="M895.5 331v5" stroke="#d8d8d8" stroke-width="1"/><ellipse cx="895.5" cy="338.5" rx="1.7" ry="2.5" fill="#d8d8d8"/><path d="M902.5 341.5v-6.5M900.2 331v2.3a2.3 2.3 0 0 0 4.6 0V331" stroke="#d8d8d8" fill="none" stroke-width="1.4"/>
<path d="M894.5 360.2h2l1-1.5h3.5l1 1.5h3.5v8h-11z" fill="#c8c8c8"/><rect x="896.3" y="361.8" width="5.6" height="4.6" fill="#1d1d1d"/><path d="M903 362.5h1.5M903 364.8h1.5" stroke="#1d1d1d" stroke-width="0.8"/><circle cx="903.8" cy="358.3" r="0.8" fill="#8a8a8a"/>
<rect x="894.5" y="380" width="11" height="3.5" rx="1" fill="#cfcfcf"/><rect x="896" y="384" width="8" height="6.5" fill="none" stroke="#cfcfcf" stroke-width="1.1"/><path d="M897.5 390l2.5-3 2.5 3z" fill="#cfcfcf"/>
<rect x="894.5" y="404" width="8" height="8.5" rx="1" fill="#7c7c7c"/><rect x="897" y="402" width="8.5" height="8.5" rx="1" fill="#cfcfcf" stroke="#1d1d1d" stroke-width="0.7"/><path d="M898 409.5l2.5-4.5 2.5 4.5z" fill="#333"/>
<path d="M897 425l-3 7.5h5.5z" fill="#d0d0d0"/><circle cx="903.8" cy="425" r="1.5" fill="#e0e0e0"/><circle cx="901.5" cy="432" r="3.1" fill="none" stroke="#d0d0d0" stroke-width="1.1"/>
<circle cx="900" cy="451" r="5.3" fill="#c9566a"/><path d="M896.5 448.5q2-1.5 3.5 0.5q-0.5 2.5 1.5 3.5q-1 2.5-3 2.5q0-2.5-2.5-3.5zM902 447q2 .5 2.5 2.5l-1.5.5z" fill="#1d1d1d"/><circle cx="900" cy="451" r="5.3" fill="none" stroke="#d86a7a" stroke-width="1"/>
<rect x="894.5" y="474" width="11" height="3" fill="#e0e0e0"/><rect x="895.3" y="477.8" width="9.4" height="7" fill="none" stroke="#e0e0e0" stroke-width="1.3"/><rect x="898.5" y="479.5" width="3" height="1.5" fill="#e0e0e0"/>
<path d="M894.5 503v-2.5h2.5M903 500.5h2.5v2.5M905.5 509.5v2.5H903M897 512h-2.5v-2.5" stroke="#8a5a30" fill="none" stroke-width="1"/><rect x="896.5" y="502.5" width="7" height="7" fill="#e0944a"/>
<path d="M904 524a5 5 0 1 0 1.2 3.8" stroke="#6b8ae0" fill="none" stroke-width="1.2"/><circle cx="900" cy="527.8" r="2.4" fill="#7a9bef"/><circle cx="904.5" cy="523.5" r="1.4" fill="#7a9bef"/>
<path d="M895.5 552.5a3.5 3.5 0 0 1 0-5l4.5-4a3.5 3.5 0 0 1 5 5l-4.5 4a3.5 3.5 0 0 1-5 0z" fill="none" stroke="#6b8ae0" stroke-width="1.2"/><circle cx="898.3" cy="549.8" r="1.8" fill="#7a9bef"/>
<g transform="translate(894,566)" stroke="#1fc69a" stroke-width="1.3" fill="none" stroke-linecap="round"><path d="M1 2.5l2.5 2 3-1 2.5 2.5M6.5 3.5l-2 4-3.5 3M4.5 7.5l3.5 1.5 1.5 2.5"/></g><circle cx="900.5" cy="567.5" r="1.3" fill="#1fc69a"/>
<path d="M896 589l8 9" stroke="#1fc69a" stroke-width="2.6"/><circle cx="895" cy="589.5" r="1.8" fill="#1fc69a"/><circle cx="896.5" cy="588" r="1.8" fill="#1fc69a"/><circle cx="903.5" cy="599.5" r="1.8" fill="#1fc69a"/><circle cx="905" cy="598" r="1.8" fill="#1fc69a"/>
<path d="M897.5 616.8l2.5 2.5 2.5-2.5" stroke="#5a5a5a" fill="none" stroke-width="1.1"/>
<rect x="919" y="327.5" width="11" height="3" fill="none" stroke="#cfcfcf" stroke-width="1"/><rect x="920" y="330.5" width="9" height="7" fill="none" stroke="#cfcfcf" stroke-width="1.1"/><rect x="923" y="332.5" width="3" height="1.5" fill="#cfcfcf"/>
<path d="M1179 338.5l3.5-3.5M1181 330.5l5 5M1183 328.5l4.5 4.5-2.5 1-3-3z" stroke="#9a9a9a" fill="none" stroke-width="1"/>
<path d="M925.8 355.09999999999997l2.6 2.8-2.6 2.8" stroke="#c8c8c8" fill="none" stroke-width="1.1"/>
<circle cx="1176.8" cy="356.4" r="0.55" fill="#777"/><circle cx="1176.8" cy="359.0" r="0.55" fill="#777"/><circle cx="1179.3999999999999" cy="356.4" r="0.55" fill="#777"/><circle cx="1179.3999999999999" cy="359.0" r="0.55" fill="#777"/><circle cx="1182.0" cy="356.4" r="0.55" fill="#777"/><circle cx="1182.0" cy="359.0" r="0.55" fill="#777"/><circle cx="1184.6" cy="356.4" r="0.55" fill="#777"/><circle cx="1184.6" cy="359.0" r="0.55" fill="#777"/>
<path d="M925.8 375.79999999999995l2.6 2.8-2.6 2.8" stroke="#c8c8c8" fill="none" stroke-width="1.1"/>
<circle cx="1176.8" cy="377.09999999999997" r="0.55" fill="#777"/><circle cx="1176.8" cy="379.7" r="0.55" fill="#777"/><circle cx="1179.3999999999999" cy="377.09999999999997" r="0.55" fill="#777"/><circle cx="1179.3999999999999" cy="379.7" r="0.55" fill="#777"/><circle cx="1182.0" cy="377.09999999999997" r="0.55" fill="#777"/><circle cx="1182.0" cy="379.7" r="0.55" fill="#777"/><circle cx="1184.6" cy="377.09999999999997" r="0.55" fill="#777"/><circle cx="1184.6" cy="379.7" r="0.55" fill="#777"/>
<path d="M925.8 396.49999999999994l2.6 2.8-2.6 2.8" stroke="#c8c8c8" fill="none" stroke-width="1.1"/>
<circle cx="1176.8" cy="397.79999999999995" r="0.55" fill="#777"/><circle cx="1176.8" cy="400.4" r="0.55" fill="#777"/><circle cx="1179.3999999999999" cy="397.79999999999995" r="0.55" fill="#777"/><circle cx="1179.3999999999999" cy="400.4" r="0.55" fill="#777"/><circle cx="1182.0" cy="397.79999999999995" r="0.55" fill="#777"/><circle cx="1182.0" cy="400.4" r="0.55" fill="#777"/><circle cx="1184.6" cy="397.79999999999995" r="0.55" fill="#777"/><circle cx="1184.6" cy="400.4" r="0.55" fill="#777"/>
<path d="M925.8 417.19999999999993l2.6 2.8-2.6 2.8" stroke="#c8c8c8" fill="none" stroke-width="1.1"/>
<circle cx="1176.8" cy="418.49999999999994" r="0.55" fill="#777"/><circle cx="1176.8" cy="421.09999999999997" r="0.55" fill="#777"/><circle cx="1179.3999999999999" cy="418.49999999999994" r="0.55" fill="#777"/><circle cx="1179.3999999999999" cy="421.09999999999997" r="0.55" fill="#777"/><circle cx="1182.0" cy="418.49999999999994" r="0.55" fill="#777"/><circle cx="1182.0" cy="421.09999999999997" r="0.55" fill="#777"/><circle cx="1184.6" cy="418.49999999999994" r="0.55" fill="#777"/><circle cx="1184.6" cy="421.09999999999997" r="0.55" fill="#777"/>
<path d="M925.8 437.9l2.6 2.8-2.6 2.8" stroke="#c8c8c8" fill="none" stroke-width="1.1"/>
<circle cx="1176.8" cy="439.2" r="0.55" fill="#777"/><circle cx="1176.8" cy="441.8" r="0.55" fill="#777"/><circle cx="1179.3999999999999" cy="439.2" r="0.55" fill="#777"/><circle cx="1179.3999999999999" cy="441.8" r="0.55" fill="#777"/><circle cx="1182.0" cy="439.2" r="0.55" fill="#777"/><circle cx="1182.0" cy="441.8" r="0.55" fill="#777"/><circle cx="1184.6" cy="439.2" r="0.55" fill="#777"/><circle cx="1184.6" cy="441.8" r="0.55" fill="#777"/>
<rect x="4.5" y="659.5" width="8" height="12" rx="3" fill="none" stroke="#a0a0a0" stroke-width="1"/><path d="M5 662.5a3 3 0 0 1 3-2.5v4.5H5z" fill="#c8c8c8"/>
<rect x="50.5" y="659.5" width="8" height="12" rx="3" fill="none" stroke="#a0a0a0" stroke-width="1"/><rect x="53.2" y="660.5" width="2.6" height="5" rx="1" fill="#c8c8c8"/>
<rect x="92.5" y="659.5" width="8" height="12" rx="3" fill="none" stroke="#a0a0a0" stroke-width="1"/><path d="M96.5 660a3 3 0 0 1 3 2.5v2h-3z" fill="#c8c8c8"/>
<circle cx="1151" cy="665.5" r="5" fill="none" stroke="#a0a0a0" stroke-width="1"/><ellipse cx="1151" cy="665.5" rx="2.2" ry="5" fill="none" stroke="#a0a0a0" stroke-width="0.9"/><path d="M1146 665.5h10M1147 662.5h8M1147 668.5h8" stroke="#a0a0a0" stroke-width="0.8"/>
<text x="1156" y="671.5" font-size="5" fill="#a0a0a0" font-family="Liberation Sans">1</text></svg>
<div class="t" style="left:15px;top:3.1px;font-size:8.2px;color:#dedede;transform:scaleX(0.897);transform-origin:0 0">* Special [K:\Personal\Characters\Vol III\Anime Character Special Vol III\Special.blend] - Blender 5.0.1</div>
<div class="t" style="left:24.6px;top:18.8px;font-size:10.2px;color:#d8d8d8;transform:scaleX(0.910);transform-origin:0 0">File</div>
<div class="t" style="left:51.7px;top:18.8px;font-size:10.2px;color:#d8d8d8;transform:scaleX(0.860);transform-origin:0 0">Edit</div>
<div class="t" style="left:79.6px;top:18.8px;font-size:10.2px;color:#d8d8d8;transform:scaleX(0.883);transform-origin:0 0">Render</div>
<div class="t" style="left:120.8px;top:18.8px;font-size:10.2px;color:#d8d8d8;transform:scaleX(0.911);transform-origin:0 0">Window</div>
<div class="t" style="left:165.8px;top:18.8px;font-size:10.2px;color:#d8d8d8;transform:scaleX(0.907);transform-origin:0 0">Help</div>
<div class="t" style="left:211px;top:18.8px;font-size:10.2px;color:#e8e8e8;transform:scaleX(0.914);transform-origin:0 0">Modeling</div>
<div class="t" style="left:57.5px;top:39.1px;font-size:10.2px;color:#d4d4d4;transform:scaleX(0.905);transform-origin:0 0">Object Mode</div>
<div class="t" style="left:133px;top:39.1px;font-size:10.2px;color:#d4d4d4;transform:scaleX(0.950);transform-origin:0 0">View</div>
<div class="t" style="left:165.6px;top:39.1px;font-size:10.2px;color:#d4d4d4;transform:scaleX(0.918);transform-origin:0 0">Select</div>
<div class="t" style="left:204px;top:39.1px;font-size:10.2px;color:#d4d4d4;transform:scaleX(0.926);transform-origin:0 0">Add</div>
<div class="t" style="left:232.5px;top:39.1px;font-size:10.2px;color:#d4d4d4;transform:scaleX(0.918);transform-origin:0 0">Object</div>
<div class="t" style="left:361.5px;top:39.1px;font-size:10.2px;color:#d4d4d4;transform:scaleX(0.923);transform-origin:0 0">Normal</div>
<div class="t" style="left:457px;top:39.1px;font-size:10.2px;color:#d4d4d4;transform:scaleX(0.934);transform-origin:0 0">Mix</div>
<div class="t" style="left:8px;top:59.6px;font-size:10.2px;color:#d4d4d4;transform:scaleX(0.908);transform-origin:0 0">Orientation:</div>
<div class="t" style="left:80px;top:59.6px;font-size:10.2px;color:#d4d4d4;transform:scaleX(0.915);transform-origin:0 0">Default</div>
<div class="t" style="left:145px;top:59.6px;font-size:10.2px;color:#d4d4d4;transform:scaleX(0.875);transform-origin:0 0">Drag:</div>
<div class="t" style="left:180.6px;top:59.6px;font-size:10.2px;color:#d4d4d4;transform:scaleX(0.908);transform-origin:0 0">Select Box</div>
<div class="t" style="left:834.6px;top:59.6px;font-size:10.2px;color:#d4d4d4;transform:scaleX(0.909);transform-origin:0 0">Options</div>
<div class="t" style="left:909.7px;top:19.3px;font-size:10.2px;color:#dcdcdc;transform:scaleX(0.855);transform-origin:0 0">AR</div>
<div class="t" style="left:970px;top:19.3px;font-size:10.2px;color:#dcdcdc;transform:scaleX(0.917);transform-origin:0 0">Scene</div>
<div class="t" style="left:1108.7px;top:19.3px;font-size:10.2px;color:#dcdcdc;transform:scaleX(0.903);transform-origin:0 0">ViewLayer</div>
<div class="t" style="left:1008.5px;top:39.5px;font-size:10.2px;color:#5e5e5e;transform:scaleX(0.892);transform-origin:0 0">Search</div>
<div class="t" style="left:923.3px;top:58.8px;font-size:10.2px;color:#d6d6d6;transform:scaleX(0.905);transform-origin:0 0">Scene Collection</div>
<div class="t" style="left:938.7px;top:74.4px;font-size:10.2px;color:#d6d6d6;transform:scaleX(0.899);transform-origin:0 0">Other</div>
<div class="t" style="left:957.5px;top:90.0px;font-size:10.2px;color:#f4f4f4;transform:scaleX(0.928);transform-origin:0 0">Anime Character Special Vol III</div>
<div class="t" style="left:954.7px;top:105.6px;font-size:10.2px;color:#d6d6d6;transform:scaleX(0.900);transform-origin:0 0">Meshes</div>
<div class="t" style="left:970px;top:121.3px;font-size:10.2px;color:#d6d6d6;transform:scaleX(0.914);transform-origin:0 0">Accessories</div>
<div class="t" style="left:970px;top:136.9px;font-size:10.2px;color:#d6d6d6;transform:scaleX(0.925);transform-origin:0 0">Body</div>
<div class="t" style="left:970px;top:152.5px;font-size:10.2px;color:#d6d6d6;transform:scaleX(0.899);transform-origin:0 0">Hair</div>
<div class="t" style="left:970px;top:168.1px;font-size:10.2px;color:#d6d6d6;transform:scaleX(0.957);transform-origin:0 0">Outfit</div>
<div class="t" style="left:954.75px;top:183.8px;font-size:10.2px;color:#d6d6d6;transform:scaleX(0.890);transform-origin:0 0">Armature</div>
<div class="t" style="left:1018px;top:303.3px;font-size:10.2px;color:#5e5e5e;transform:scaleX(0.892);transform-origin:0 0">Search</div>
<div class="t" style="left:937px;top:327.0px;font-size:10.2px;color:#dcdcdc;transform:scaleX(0.928);transform-origin:0 0">Anime Character Special Vol III</div>
<div class="t" style="left:934px;top:352.8px;font-size:10.2px;color:#d6d6d6;transform:scaleX(0.945);transform-origin:0 0">Visibility</div>
<div class="t" style="left:934px;top:373.5px;font-size:10.2px;color:#d6d6d6;transform:scaleX(0.939);transform-origin:0 0">Instancing</div>
<div class="t" style="left:934px;top:394.2px;font-size:10.2px;color:#d6d6d6;transform:scaleX(0.908);transform-origin:0 0">Exporters</div>
<div class="t" style="left:934px;top:414.9px;font-size:10.2px;color:#d6d6d6;transform:scaleX(0.926);transform-origin:0 0">Line Art</div>
<div class="t" style="left:934px;top:435.6px;font-size:10.2px;color:#d6d6d6;transform:scaleX(0.898);transform-origin:0 0">Custom Properties</div>
<div class="t" style="left:16px;top:660.8px;font-size:10.2px;color:#a8a8a8;transform:scaleX(0.918);transform-origin:0 0">Select</div>
<div class="t" style="left:61px;top:660.8px;font-size:10.2px;color:#a8a8a8;transform:scaleX(0.915);transform-origin:0 0">Move</div>
<div class="t" style="left:103px;top:660.8px;font-size:10.2px;color:#a8a8a8;transform:scaleX(0.909);transform-origin:0 0">Options</div>
<div class="t" style="left:1168.5px;top:660.8px;font-size:10.2px;color:#a8a8a8;transform:scaleX(0.939);transform-origin:0 0">5.0.1</div>
</body></html>
